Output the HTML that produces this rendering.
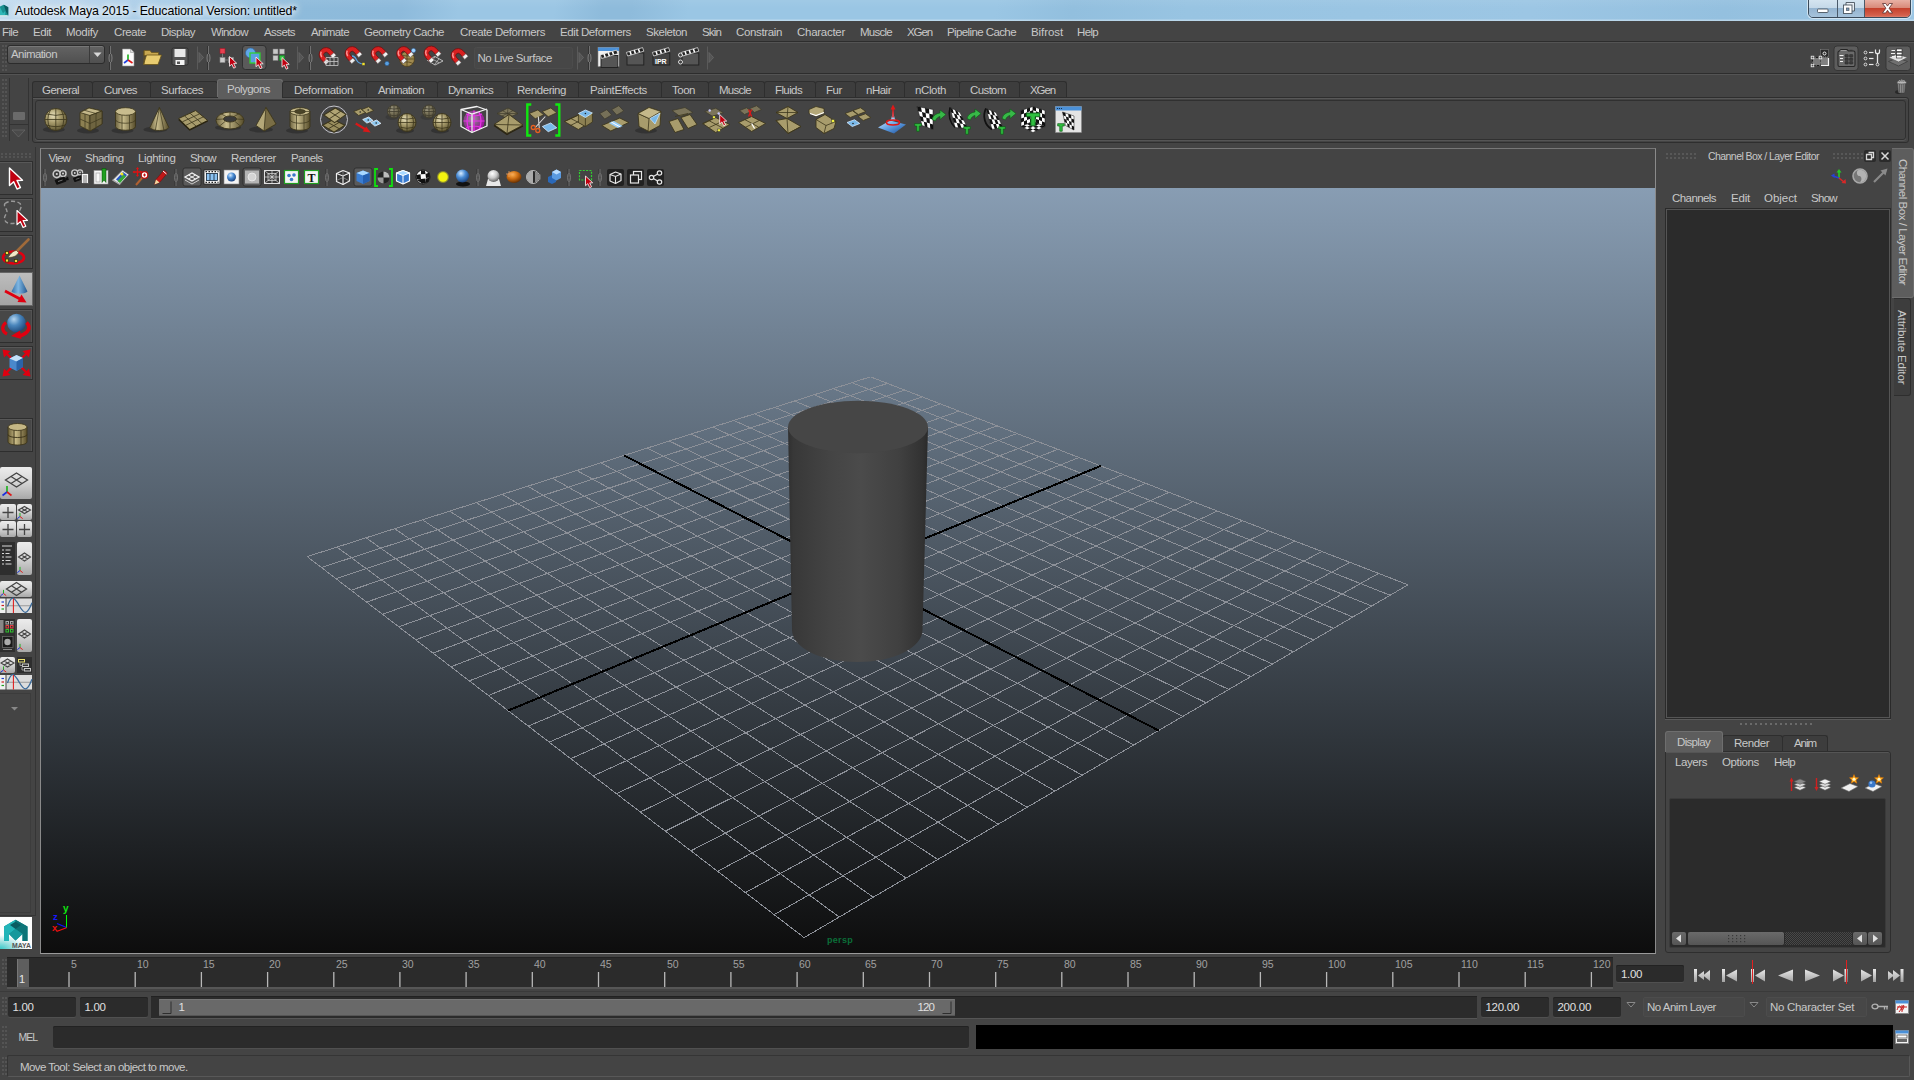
<!DOCTYPE html>
<html lang="en"><head><meta charset="utf-8"><title>Autodesk Maya 2015 - Educational Version: untitled*</title>
<style>
html,body{margin:0;padding:0;background:#444;}
body{width:1914px;height:1080px;overflow:hidden;font-family:"Liberation Sans",sans-serif;font-size:11px;color:#c8c8c8;}
#app{position:relative;width:1914px;height:1080px;overflow:hidden;background:#444;}
.a{position:absolute;}
.t{position:absolute;white-space:nowrap;line-height:14px;height:14px;color:#c8c8c8;font-size:11.5px;}
svg{position:absolute;overflow:visible;}
.fld{position:absolute;background:#2b2b2b;border-radius:2px;box-shadow:inset 0 1px 0 #222, 0 1px 0 #505050;}
.mi{position:absolute;top:25px;white-space:nowrap;line-height:14px;height:14px;color:#c8c8c8;font-size:11.5px;}
.tab{position:absolute;top:81px;height:17px;box-sizing:border-box;border:1px solid #2e2e2e;border-bottom:none;background:#3d3d3d;border-radius:3px 3px 0 0;}
.tabt{position:absolute;top:83px;white-space:nowrap;line-height:14px;height:14px;color:#c8c8c8;font-size:11.5px;}


#vp{left:41px;top:188px;width:1614px;height:765px;background:linear-gradient(180deg,rgb(136,157,179) 0,rgb(13,13,13) 100%);overflow:hidden;}

.grip{position:absolute;background-image:radial-gradient(circle at 1px 1px,#585858 0.9px,transparent 1.1px);background-size:4px 4px;}
.vtab{position:absolute;box-sizing:border-box;border:1px solid #2e2e2e;border-left:none;border-radius:0 3px 3px 0;}
.vt{position:absolute;white-space:nowrap;transform-origin:0 0;transform:rotate(90deg);line-height:14px;height:14px;font-size:11.5px;color:#c8c8c8;}
.sbtn{position:absolute;background:linear-gradient(180deg,#6a6a6a,#555);border-radius:2px;box-shadow:0 0 0 1px #2a2a2a;}
.vgrip{position:absolute;width:5px;background-image:radial-gradient(circle at 1px 1px,#545454 0.9px,transparent 1.1px);background-size:3px 4px;}
.dd{position:absolute;box-sizing:border-box;border:1px solid #4c4c4c;border-radius:2px;background:#474747;}
.tb{position:absolute;left:0;width:33px;height:34px;box-sizing:border-box;border:1px solid #2e2e2e;border-left:none;background:#474747;box-shadow:inset 0 1px 0 #585858, inset -1px 0 0 #525252;}
.lb{position:absolute;background:linear-gradient(180deg,#ececec,#d8d8d8 45%,#a8a8a8);border-radius:2px;overflow:hidden;}
.db{position:absolute;background:#2e2e2e;}
</style></head><body>
<div id="app">
<!-- s00_base -->
<div class="a" id="titlebar" style="left:0;top:0;width:1914px;height:21px;background:linear-gradient(100deg,#c4dcef 0,#b2d1ea 5%,#9fc8e5 11%,#8ebbdb 15%,#8dbadb 21%,#9bc6e4 24%,#9bc6e4 29%,#8ebbdb 31.5%,#8ebbdb 33%,#9ac6e4 36%,#9ac6e4 52%,#92bfde 56%,#98c4e2 62%,#9cc6e4 80%,#94c0df 90%,#9cc6e4 100%);"></div>
<div class="a" style="left:0;top:0;width:1914px;height:21px;background:linear-gradient(180deg,rgba(255,255,255,.06),rgba(255,255,255,0) 40%,rgba(255,255,255,0) 88%,rgba(255,255,255,.4) 100%);"></div>
<svg width="9" height="14" viewBox="0 0 12 18" style="left:0;top:4px"><path d="M0 3l5-2.500 6 3.500v11h-11z" fill="#1a9090"/><path d="M5 .5l6 3.500v11l-3-5z" fill="#0a5a60"/><path d="M0 15V4l4 8 3-3v6z" fill="#30b8b8"/><rect x="0" y="14.500" width="10" height="2" fill="#cfe8e8"/></svg>
<span class="t" style="left:15px;top:3.5px;font-size:12.4px;color:#000;line-height:15px;height:15px;letter-spacing:-0.13px;text-shadow:0 0 5px #fff,0 0 8px #fff,0 0 12px rgba(255,255,255,.9);">Autodesk Maya 2015 - Educational Version: untitled*</span>
<div class="a" style="left:1808px;top:-1px;width:103px;height:19px;box-sizing:border-box;border:1px solid #3a4a5a;border-radius:0 0 5px 5px;overflow:hidden;box-shadow:0 0 0 1px rgba(255,255,255,.55);"><div class="a" style="left:0;top:0;width:28px;height:18px;background:linear-gradient(180deg,#d4e4f0 0,#c4d8e8 45%,#94b4d0 46%,#a8c4dc 100%);border-right:1px solid #4a5a6a;"></div><div class="a" style="left:29px;top:0;width:26px;height:18px;background:linear-gradient(180deg,#d4e4f0 0,#c4d8e8 45%,#94b4d0 46%,#a8c4dc 100%);border-right:1px solid #4a5a6a;"></div><div class="a" style="left:56px;top:0;width:47px;height:18px;background:linear-gradient(180deg,#e8b0a4 0,#d88878 45%,#c4402c 46%,#d4604c 85%,#e09080 100%);"></div></div>
<svg width="103" height="18" viewBox="1808 0 103 18" style="left:1808px;top:0"><rect x="1817.500" y="9" width="10.500" height="3.500" rx=".8" fill="#fff" stroke="#4a5560" stroke-width=".9"/><path d="M1846 5.500v-3h8.500v8.500h-2.500" fill="#e8eef4" stroke="#4a5560" stroke-width=".9"/><rect x="1843.500" y="5" width="8.500" height="8.500" fill="#fff" stroke="#4a5560" stroke-width=".9"/><rect x="1846.500" y="8" width="2.500" height="2.500" fill="#7a9ab8" stroke="#4a5560" stroke-width=".7"/><path d="M1882.500 3.500h3.200l1.800 2.600 1.800-2.600h3.200l-3.400 4.700 3.400 4.800h-3.200l-1.800-2.700-1.800 2.700h-3.200l3.400-4.800z" fill="#fff" stroke="#5a3030" stroke-width=".8" stroke-linejoin="round"/></svg>
<!-- s05_menus -->
<div class="a" style="left:0;top:21px;width:1914px;height:21px;background:#444;"></div>
<div class="a" style="left:0;top:41px;width:1914px;height:1px;background:#2d2d2d;"></div>
<div class="a" style="left:0;top:42px;width:1914px;height:1px;background:#545454;"></div>
<span class="t" style="left:2px;top:25px;font-size:11.5px;color:#c8c8c8;line-height:14px;height:14px;letter-spacing:-0.63px;">File</span>
<span class="t" style="left:33px;top:25px;font-size:11.5px;color:#c8c8c8;line-height:14px;height:14px;letter-spacing:-0.46px;">Edit</span>
<span class="t" style="left:66px;top:25px;font-size:11.5px;color:#c8c8c8;line-height:14px;height:14px;letter-spacing:-0.31px;">Modify</span>
<span class="t" style="left:114px;top:25px;font-size:11.5px;color:#c8c8c8;line-height:14px;height:14px;letter-spacing:-0.42px;">Create</span>
<span class="t" style="left:161px;top:25px;font-size:11.5px;color:#c8c8c8;line-height:14px;height:14px;letter-spacing:-0.53px;">Display</span>
<span class="t" style="left:211px;top:25px;font-size:11.5px;color:#c8c8c8;line-height:14px;height:14px;letter-spacing:-0.65px;">Window</span>
<span class="t" style="left:264px;top:25px;font-size:11.5px;color:#c8c8c8;line-height:14px;height:14px;letter-spacing:-0.59px;">Assets</span>
<span class="t" style="left:311px;top:25px;font-size:11.5px;color:#c8c8c8;line-height:14px;height:14px;letter-spacing:-0.60px;">Animate</span>
<span class="t" style="left:364px;top:25px;font-size:11.5px;color:#c8c8c8;line-height:14px;height:14px;letter-spacing:-0.50px;">Geometry Cache</span>
<span class="t" style="left:460px;top:25px;font-size:11.5px;color:#c8c8c8;line-height:14px;height:14px;letter-spacing:-0.40px;">Create Deformers</span>
<span class="t" style="left:560px;top:25px;font-size:11.5px;color:#c8c8c8;line-height:14px;height:14px;letter-spacing:-0.41px;">Edit Deformers</span>
<span class="t" style="left:646px;top:25px;font-size:11.5px;color:#c8c8c8;line-height:14px;height:14px;letter-spacing:-0.47px;">Skeleton</span>
<span class="t" style="left:702px;top:25px;font-size:11.5px;color:#c8c8c8;line-height:14px;height:14px;letter-spacing:-0.84px;">Skin</span>
<span class="t" style="left:736px;top:25px;font-size:11.5px;color:#c8c8c8;line-height:14px;height:14px;letter-spacing:-0.36px;">Constrain</span>
<span class="t" style="left:797px;top:25px;font-size:11.5px;color:#c8c8c8;line-height:14px;height:14px;letter-spacing:-0.28px;">Character</span>
<span class="t" style="left:860px;top:25px;font-size:11.5px;color:#c8c8c8;line-height:14px;height:14px;letter-spacing:-0.74px;">Muscle</span>
<span class="t" style="left:907px;top:25px;font-size:11.5px;color:#c8c8c8;line-height:14px;height:14px;letter-spacing:-1.11px;">XGen</span>
<span class="t" style="left:947px;top:25px;font-size:11.5px;color:#c8c8c8;line-height:14px;height:14px;letter-spacing:-0.60px;">Pipeline Cache</span>
<span class="t" style="left:1031px;top:25px;font-size:11.5px;color:#c8c8c8;line-height:14px;height:14px;letter-spacing:-0.08px;">Bifrost</span>
<span class="t" style="left:1077px;top:25px;font-size:11.5px;color:#c8c8c8;line-height:14px;height:14px;letter-spacing:-0.66px;">Help</span>
<div class="a" style="left:0;top:73px;width:1914px;height:1px;background:#2d2d2d;"></div>
<div class="a" style="left:0;top:74px;width:1914px;height:1px;background:#545454;"></div>
<div class="tab" style="left:32px;width:61px;"></div>
<span class="t" style="left:42px;top:83px;font-size:11.5px;color:#c8c8c8;line-height:14px;height:14px;letter-spacing:-0.56px;">General</span>
<div class="tab" style="left:92px;width:59px;"></div>
<span class="t" style="left:104px;top:83px;font-size:11.5px;color:#c8c8c8;line-height:14px;height:14px;letter-spacing:-0.57px;">Curves</span>
<div class="tab" style="left:150px;width:68px;"></div>
<span class="t" style="left:161px;top:83px;font-size:11.5px;color:#c8c8c8;line-height:14px;height:14px;letter-spacing:-0.42px;">Surfaces</span>
<div class="tab" style="left:217px;width:66px;top:79px;height:21px;background:#5d5d5d;border-color:#6e6e6e;"></div>
<span class="t" style="left:227px;top:82px;font-size:11.5px;color:#c8c8c8;line-height:14px;height:14px;letter-spacing:-0.54px;">Polygons</span>
<div class="tab" style="left:282px;width:85px;"></div>
<span class="t" style="left:294px;top:83px;font-size:11.5px;color:#c8c8c8;line-height:14px;height:14px;letter-spacing:-0.33px;">Deformation</span>
<div class="tab" style="left:366px;width:72px;"></div>
<span class="t" style="left:378px;top:83px;font-size:11.5px;color:#c8c8c8;line-height:14px;height:14px;letter-spacing:-0.57px;">Animation</span>
<div class="tab" style="left:437px;width:71px;"></div>
<span class="t" style="left:448px;top:83px;font-size:11.5px;color:#c8c8c8;line-height:14px;height:14px;letter-spacing:-0.69px;">Dynamics</span>
<div class="tab" style="left:507px;width:72px;"></div>
<span class="t" style="left:517px;top:83px;font-size:11.5px;color:#c8c8c8;line-height:14px;height:14px;letter-spacing:-0.45px;">Rendering</span>
<div class="tab" style="left:578px;width:84px;"></div>
<span class="t" style="left:590px;top:83px;font-size:11.5px;color:#c8c8c8;line-height:14px;height:14px;letter-spacing:-0.35px;">PaintEffects</span>
<div class="tab" style="left:661px;width:48px;"></div>
<span class="t" style="left:672px;top:83px;font-size:11.5px;color:#c8c8c8;line-height:14px;height:14px;letter-spacing:-0.48px;">Toon</span>
<div class="tab" style="left:708px;width:57px;"></div>
<span class="t" style="left:719px;top:83px;font-size:11.5px;color:#c8c8c8;line-height:14px;height:14px;letter-spacing:-0.74px;">Muscle</span>
<div class="tab" style="left:764px;width:52px;"></div>
<span class="t" style="left:775px;top:83px;font-size:11.5px;color:#c8c8c8;line-height:14px;height:14px;letter-spacing:-0.61px;">Fluids</span>
<div class="tab" style="left:815px;width:41px;"></div>
<span class="t" style="left:826px;top:83px;font-size:11.5px;color:#c8c8c8;line-height:14px;height:14px;letter-spacing:-0.42px;">Fur</span>
<div class="tab" style="left:855px;width:50px;"></div>
<span class="t" style="left:866px;top:83px;font-size:11.5px;color:#c8c8c8;line-height:14px;height:14px;letter-spacing:-0.50px;">nHair</span>
<div class="tab" style="left:904px;width:56px;"></div>
<span class="t" style="left:915px;top:83px;font-size:11.5px;color:#c8c8c8;line-height:14px;height:14px;letter-spacing:-0.38px;">nCloth</span>
<div class="tab" style="left:959px;width:61px;"></div>
<span class="t" style="left:970px;top:83px;font-size:11.5px;color:#c8c8c8;line-height:14px;height:14px;letter-spacing:-0.60px;">Custom</span>
<div class="tab" style="left:1019px;width:48px;"></div>
<span class="t" style="left:1030px;top:83px;font-size:11.5px;color:#c8c8c8;line-height:14px;height:14px;letter-spacing:-1.11px;">XGen</span>
<div class="a" style="left:32px;top:97px;width:1877px;height:46px;box-sizing:border-box;border:1px solid #2e2e2e;border-radius:0 3px 3px 3px;background:#444;box-shadow:inset 0 1px 0 #585858;"></div>
<div class="a" style="left:35px;top:100px;width:1871px;height:40px;box-sizing:border-box;border:1px solid #303030;border-radius:3px;background:#444;box-shadow:0 1px 0 #555;"></div>
<div class="a" style="left:218px;top:97px;width:64px;height:2px;background:#5d5d5d;"></div>
<!-- s06_status -->
<div class="a" style="left:2px;top:45px;width:5px;height:26px;background-image:radial-gradient(circle at 1px 1px,#545454 0.9px,transparent 1.1px);background-size:3px 4px;"></div>
<div class="a" style="left:7px;top:45px;width:98px;height:19px;box-sizing:border-box;border:1px solid #2c2c2c;border-radius:3px;background:linear-gradient(180deg,#636363,#505050);box-shadow:inset 0 1px 0 #777;"></div>
<div class="a" style="left:89px;top:46px;width:1px;height:17px;background:#3a3a3a;"></div>
<svg width="10" height="6" style="left:93px;top:52px"><path d="M.5 .5h8L4.500 5z" fill="#d8d8d8"/></svg>
<span class="t" style="left:11px;top:47px;font-size:11.5px;color:#c8c8c8;line-height:14px;height:14px;letter-spacing:-0.57px;">Animation</span>
<svg width="720" height="32" viewBox="0 42 720 32" style="left:0;top:42px"><path d="M109.5 46V70" stroke="#333" stroke-width="1"/><path d="M110.5 46V70" stroke="#707070" stroke-width="1"/><ellipse cx="110.5" cy="58" rx="1.500" ry="4.500" fill="#444" stroke="#888" stroke-width=".9"/><g transform="translate(0 2)"><path d="M122.500 47h8l3.500 3.500v13.500h-11.500z" fill="#fafafa" stroke="#999" stroke-width=".6"/><path d="M130.500 47v3.500h3.500" fill="#ddd" stroke="#999" stroke-width=".6"/><path d="M128 58v-5.500" stroke="#18b018" stroke-width="1.600"/><path d="M128 58l-4 3" stroke="#2040e0" stroke-width="1.600"/><path d="M128 58l4.500 3" stroke="#e01818" stroke-width="1.600"/></g><path d="M144 50.500h6l1.500 2h7v3h-14.500z" fill="#c8a850" stroke="#6a5418" stroke-width=".7"/><path d="M143.500 64.500l3-9.500h15l-3.500 9.500z" fill="#e8cc70" stroke="#6a5418" stroke-width=".8"/><path d="M144 64V51" stroke="#6a5418" stroke-width=".8"/><rect x="172" y="48" width="16" height="17" rx="1.500" fill="#555" stroke="#2a2a2a" stroke-width=".8"/><rect x="174.500" y="49" width="11" height="8" fill="#e8e8e8"/><rect x="175.500" y="60" width="9" height="5" fill="#f4f4f4"/><rect x="177" y="61.500" width="3" height="2.500" fill="#555"/><path d="M197.5 46.5V69.5" stroke="#5a5a5a" stroke-width="1"/><path d="M199 52.5l4.500 5-4.500 5z" fill="#555" stroke="#6a6a6a" stroke-width=".8"/><path d="M207.5 46V70" stroke="#333" stroke-width="1"/><path d="M208.5 46V70" stroke="#707070" stroke-width="1"/><ellipse cx="208.5" cy="58" rx="1.500" ry="4.500" fill="#444" stroke="#888" stroke-width=".9"/><rect x="220" y="48.500" width="5" height="5" fill="#e84050" stroke="#a01828" stroke-width=".6"/><rect x="220" y="57.500" width="5" height="5" fill="#ccc" stroke="#888" stroke-width=".6"/><rect x="228.500" y="57.500" width="5" height="5" fill="#ccc" stroke="#888" stroke-width=".6"/><path d="M222.500 53.500v4M225 60h3.500" stroke="#888" stroke-width=".8"/><g transform="translate(229.5 56.5) scale(0.72)"><path d="M0 0L0 13.5L3.2 10.6L5.8 16.2L8.4 15L5.8 9.6L10 9.4Z" fill="#c00010" stroke="#fff" stroke-width="1.1" stroke-linejoin="round"/></g><rect x="242.500" y="45.500" width="23.500" height="24" rx="3" fill="#5a5a5a" stroke="#2c2c2c" stroke-width=".9"/><circle cx="250.500" cy="53" r="5" fill="#60a8e8" stroke="#2860a0" stroke-width=".6"/><rect x="250" y="53" width="10" height="10" fill="#5aa0e0" stroke="#30d030" stroke-width="1.300"/><g transform="translate(256 57) scale(0.72)"><path d="M0 0L0 13.5L3.2 10.6L5.8 16.2L8.4 15L5.8 9.6L10 9.4Z" fill="#c00010" stroke="#fff" stroke-width="1.1" stroke-linejoin="round"/></g><g fill="#c8c8c8" stroke="#777" stroke-width=".5"><rect x="273" y="49" width="5" height="5"/><rect x="279.500" y="49" width="5" height="5"/><rect x="273" y="55.500" width="5" height="5"/></g><rect x="279.500" y="55.500" width="5" height="5" fill="#30c040" stroke="#108020" stroke-width=".5"/><g transform="translate(282 57.5) scale(0.72)"><path d="M0 0L0 13.5L3.2 10.6L5.8 16.2L8.4 15L5.8 9.6L10 9.4Z" fill="#c00010" stroke="#fff" stroke-width="1.1" stroke-linejoin="round"/></g><path d="M297.5 46.5V69.5" stroke="#5a5a5a" stroke-width="1"/><path d="M299 52.5l4.500 5-4.500 5z" fill="#555" stroke="#6a6a6a" stroke-width=".8"/><path d="M309.5 46V70" stroke="#333" stroke-width="1"/><path d="M310.5 46V70" stroke="#707070" stroke-width="1"/><ellipse cx="310.5" cy="58" rx="1.500" ry="4.500" fill="#444" stroke="#888" stroke-width=".9"/><g transform="translate(326.5 55) rotate(-42) scale(1.08)"><path d="M-6.500 5v-5.500a6.500 6.500 0 0 1 13 0V5h-4.300V-.5a2.200 2.200 0 0 0-4.400 0V5z" fill="#d82020" stroke="#701010" stroke-width=".7"/><rect x="-6.500" y="3" width="4.300" height="3.200" fill="#f0f0f0" stroke="#555" stroke-width=".5"/><rect x="2.200" y="3" width="4.300" height="3.200" fill="#f0f0f0" stroke="#555" stroke-width=".5"/><path d="M-4.500 -1.500a4.500 4.500 0 0 1 3-4" fill="none" stroke="#ff9090" stroke-width="1.200"/></g><path d="M326 57.500h12M326 61.500h12M326 65.500h12M326 57.500v8M330 57.500v8M334 57.500v8M338 57.500v8" stroke="#c8c8c8" stroke-width=".8" fill="none"/><g transform="translate(352.5 54) rotate(-42) scale(1.08)"><path d="M-6.500 5v-5.500a6.500 6.500 0 0 1 13 0V5h-4.300V-.5a2.200 2.200 0 0 0-4.400 0V5z" fill="#d82020" stroke="#701010" stroke-width=".7"/><rect x="-6.500" y="3" width="4.300" height="3.200" fill="#f0f0f0" stroke="#555" stroke-width=".5"/><rect x="2.200" y="3" width="4.300" height="3.200" fill="#f0f0f0" stroke="#555" stroke-width=".5"/><path d="M-4.500 -1.500a4.500 4.500 0 0 1 3-4" fill="none" stroke="#ff9090" stroke-width="1.200"/></g><path d="M352 56c6 0 2 8 12 8" fill="none" stroke="#5aa0e0" stroke-width="1.300"/><rect x="362" y="62.500" width="3" height="3" fill="#f0e030" stroke="#333" stroke-width=".5"/><g transform="translate(378.5 54) rotate(-42) scale(1.08)"><path d="M-6.500 5v-5.500a6.500 6.500 0 0 1 13 0V5h-4.300V-.5a2.200 2.200 0 0 0-4.400 0V5z" fill="#d82020" stroke="#701010" stroke-width=".7"/><rect x="-6.500" y="3" width="4.300" height="3.200" fill="#f0f0f0" stroke="#555" stroke-width=".5"/><rect x="2.200" y="3" width="4.300" height="3.200" fill="#f0f0f0" stroke="#555" stroke-width=".5"/><path d="M-4.500 -1.500a4.500 4.500 0 0 1 3-4" fill="none" stroke="#ff9090" stroke-width="1.200"/></g><circle cx="387" cy="63.500" r="2.200" fill="#5aa0e0" stroke="#1c4a80" stroke-width=".5"/><circle cx="407" cy="59" r="7.500" fill="#a08a50" stroke="#4a3c18" stroke-width=".7"/><path d="M399.500 59h15M407 51.500v15M401 54.500c4 2 8 2 12 0M401 63.500c4-2 8-2 12 0" fill="none" stroke="#4a3c18" stroke-width=".7"/><g transform="translate(404 54) rotate(-42) scale(1.08)"><path d="M-6.500 5v-5.500a6.500 6.500 0 0 1 13 0V5h-4.300V-.5a2.200 2.200 0 0 0-4.400 0V5z" fill="#d82020" stroke="#701010" stroke-width=".7"/><rect x="-6.500" y="3" width="4.300" height="3.200" fill="#f0f0f0" stroke="#555" stroke-width=".5"/><rect x="2.200" y="3" width="4.300" height="3.200" fill="#f0f0f0" stroke="#555" stroke-width=".5"/><path d="M-4.500 -1.500a4.500 4.500 0 0 1 3-4" fill="none" stroke="#ff9090" stroke-width="1.200"/></g><circle cx="413.500" cy="50.500" r="2.200" fill="#9cd0ff" stroke="#1c4a80" stroke-width=".5"/><path d="M427 60l8-3.500 8 4.500-8 4z" fill="none" stroke="#c8c8c8" stroke-width=".9"/><path d="M431 58.300l8 4.400M435 56.500l-4 6M439 58.800l-4.500 5.800" stroke="#c8c8c8" stroke-width=".7"/><g transform="translate(431.5 53.5) rotate(-42) scale(1.08)"><path d="M-6.500 5v-5.500a6.500 6.500 0 0 1 13 0V5h-4.300V-.5a2.200 2.200 0 0 0-4.400 0V5z" fill="#d82020" stroke="#701010" stroke-width=".7"/><rect x="-6.500" y="3" width="4.300" height="3.200" fill="#f0f0f0" stroke="#555" stroke-width=".5"/><rect x="2.200" y="3" width="4.300" height="3.200" fill="#f0f0f0" stroke="#555" stroke-width=".5"/><path d="M-4.500 -1.500a4.500 4.500 0 0 1 3-4" fill="none" stroke="#ff9090" stroke-width="1.200"/></g><g transform="translate(458.5 56) rotate(-42) scale(1.08)"><path d="M-6.500 5v-5.500a6.500 6.500 0 0 1 13 0V5h-4.300V-.5a2.200 2.200 0 0 0-4.400 0V5z" fill="#d82020" stroke="#701010" stroke-width=".7"/><rect x="-6.500" y="3" width="4.300" height="3.200" fill="#f0f0f0" stroke="#555" stroke-width=".5"/><rect x="2.200" y="3" width="4.300" height="3.200" fill="#f0f0f0" stroke="#555" stroke-width=".5"/><path d="M-4.500 -1.500a4.500 4.500 0 0 1 3-4" fill="none" stroke="#ff9090" stroke-width="1.200"/></g><rect x="474.500" y="47.500" width="98" height="21" rx="2" fill="#474747" stroke="#4c4c4c"/><path d="M577.5 46.5V69.5" stroke="#5a5a5a" stroke-width="1"/><path d="M579 52.5l4.500 5-4.500 5z" fill="#555" stroke="#6a6a6a" stroke-width=".8"/><path d="M588.5 46V70" stroke="#333" stroke-width="1"/><path d="M589.5 46V70" stroke="#707070" stroke-width="1"/><ellipse cx="589.5" cy="58" rx="1.500" ry="4.500" fill="#444" stroke="#888" stroke-width=".9"/><rect x="598" y="47.500" width="21" height="19" fill="#f0f0f0" stroke="#888" stroke-width=".6"/><rect x="598" y="47.500" width="21" height="3.500" fill="#4a90d8"/><g transform="translate(601 49.5) scale(1.2)"><rect x="0" y="5" width="14" height="10" fill="#555" stroke="#222" stroke-width=".8"/><path d="M-.5 4.500l13.500-4 1 3-13.500 4z" fill="#222" stroke="#eee" stroke-width=".6"/><path d="M2.500 3.600l1 2.800M6 2.600l1 2.800M9.500 1.600l1 2.800" stroke="#fff" stroke-width="1.300"/></g><g transform="translate(627 47) scale(1.2)"><rect x="0" y="5" width="14" height="10" fill="#555" stroke="#222" stroke-width=".8"/><path d="M-.5 4.500l13.500-4 1 3-13.500 4z" fill="#222" stroke="#eee" stroke-width=".6"/><path d="M2.500 3.600l1 2.800M6 2.600l1 2.800M9.500 1.600l1 2.800" stroke="#fff" stroke-width="1.300"/></g><g transform="translate(653 47) scale(1.2)"><rect x="0" y="5" width="14" height="10" fill="#444" stroke="#222" stroke-width=".8"/><path d="M-.5 4.500l13.500-4 1 3-13.500 4z" fill="#222" stroke="#eee" stroke-width=".6"/><path d="M2.500 3.600l1 2.800M6 2.600l1 2.800M9.500 1.600l1 2.800" stroke="#fff" stroke-width="1.300"/></g><text x="655" y="64" font-size="7" font-weight="bold" fill="#fff" font-family="Liberation Sans,sans-serif">IPR</text><g transform="translate(682 47) scale(1.2)"><rect x="0" y="5" width="14" height="10" fill="#555" stroke="#222" stroke-width=".8"/><path d="M-.5 4.500l13.500-4 1 3-13.500 4z" fill="#222" stroke="#eee" stroke-width=".6"/><path d="M2.500 3.600l1 2.800M6 2.600l1 2.800M9.500 1.600l1 2.800" stroke="#fff" stroke-width="1.300"/></g><circle cx="680.500" cy="55" r="2" fill="none" stroke="#ddd" stroke-width="1"/><circle cx="680.500" cy="62" r="2" fill="none" stroke="#ddd" stroke-width="1"/><path d="M707.5 46.5V69.5" stroke="#5a5a5a" stroke-width="1"/><path d="M709 52.5l4.500 5-4.500 5z" fill="#555" stroke="#6a6a6a" stroke-width=".8"/></svg>
<span class="t" style="left:477.5px;top:51px;font-size:11.5px;color:#c8c8c8;line-height:14px;height:14px;letter-spacing:-0.49px;">No Live Surface</span>
<svg width="110" height="32" viewBox="1806 42 110 32" style="left:1806px;top:42px"><rect x="1812.500" y="57.500" width="8" height="8" fill="#7a7a7a" stroke="#1a1a1a" stroke-width="1" stroke-dasharray="2 1.500"/><rect x="1820.500" y="57.500" width="8" height="8" fill="#808080"/><path d="M1821 65.500h7.500V58" fill="none" stroke="#f4f4f4" stroke-width="1.200"/><rect x="1820.500" y="49.500" width="8" height="7.500" fill="#2a2a2a" stroke="#999" stroke-width=".8" stroke-dasharray="1 1"/><circle cx="1824.500" cy="53.500" r="1.500" fill="none" stroke="#f0f0f0" stroke-width="1"/><rect x="1811.2" y="56.2" width="2.600" height="2.600" fill="#555" stroke="#f0f0f0" stroke-width=".8"/><rect x="1819.2" y="56.2" width="2.600" height="2.600" fill="#555" stroke="#f0f0f0" stroke-width=".8"/><rect x="1811.2" y="64.2" width="2.600" height="2.600" fill="#555" stroke="#f0f0f0" stroke-width=".8"/><rect x="1834" y="46" width="24" height="24.500" rx="3" fill="#5d5d5d" stroke="#333" stroke-width=".9"/><path d="M1838 52.500c0-1 .5-1.500 1.500-1.500l1.500-1.500h6l1.500 1.500h5c1 0 1.500 .5 1.500 1.500v12.500c0 1-.5 1.500-1.500 1.500h-14c-1 0-1.500-.5-1.500-1.500z" fill="#6a6a6a" stroke="#262626" stroke-width="1.100"/><path d="M1840.500 50.500h6" stroke="#999" stroke-width="1"/><path d="M1849.500 50.300h3" stroke="#333" stroke-width="1"/><path d="M1839.500 55.500h4M1840 58.500h3M1840 61.500h3" stroke="#f0f0f0" stroke-width="1.100"/><g fill="#3a3a3a" stroke="#2a2a2a" stroke-width=".5"><rect x="1845" y="54.500" width="3.300" height="2.600" rx=".6"/><rect x="1849.500" y="54.500" width="3.300" height="2.600" rx=".6"/><rect x="1845" y="58" width="3.300" height="2.600" rx=".6"/><rect x="1849.500" y="58" width="3.300" height="2.600" rx=".6"/><rect x="1845" y="61.500" width="3.300" height="2.600" rx=".6"/><rect x="1849.500" y="61.500" width="3.300" height="2.600" rx=".6"/></g><circle cx="1865.500" cy="52.5" r="1.400" fill="#444" stroke="#e8e8e8" stroke-width=".9"/><path d="M1869 52.5h4.500" stroke="#e8e8e8" stroke-width="1.200"/><circle cx="1865.500" cy="58.5" r="1.400" fill="#444" stroke="#e8e8e8" stroke-width=".9"/><path d="M1869 58.5h4.500" stroke="#e8e8e8" stroke-width="1.200"/><circle cx="1865.500" cy="64.5" r="1.400" fill="#444" stroke="#e8e8e8" stroke-width=".9"/><path d="M1869 64.5h4.500" stroke="#e8e8e8" stroke-width="1.200"/><path d="M1877.500 53v10" stroke="#e8e8e8" stroke-width="1.300"/><path d="M1875.500 49.500v2.200a2 2 0 0 0 4 0v-2.200" fill="none" stroke="#e8e8e8" stroke-width="1.200"/><circle cx="1877.500" cy="64.500" r="1.400" fill="#444" stroke="#e8e8e8" stroke-width=".9"/><rect x="1886" y="46" width="24.500" height="24.500" rx="3" fill="#5d5d5d" stroke="#333" stroke-width=".9"/><path d="M1888.500 61.500l9-3.500 10 3.500-9 4.500z" fill="#707070" stroke="#3a3a3a" stroke-width=".7"/><path d="M1888.500 57.500l9-3.500 10 3.500-9 4.500z" fill="#e0e0e0" stroke="#555" stroke-width=".7"/><path d="M1891.500 50.500h3.500M1891 53.500h4M1892 56.500h3" stroke="#f0f0f0" stroke-width="1"/><g fill="#fff" stroke="#222" stroke-width=".6"><rect x="1896.500" y="49" width="5.500" height="2.600"/><rect x="1896.500" y="52.200" width="5.500" height="2.600"/><rect x="1896.500" y="55.400" width="5.500" height="2.600"/></g></svg>
<!-- s07_shelf -->
<div class="a" style="left:2px;top:79px;width:5px;height:60px;background-image:radial-gradient(circle at 1px 1px,#545454 0.9px,transparent 1.1px);background-size:3px 4px;"></div>
<div class="a" style="left:9px;top:78px;width:20px;height:63px;box-sizing:border-box;border:1px solid #333;border-top:none;border-bottom:none;"></div>
<div class="a" style="left:13px;top:112px;width:12px;height:8px;background:#6a6a6a;border-radius:1px;"></div>
<div class="a" style="left:10px;top:124px;width:18px;height:1px;background:#333;"></div>
<svg width="16" height="9" style="left:11px;top:129px"><path d="M1 1h13L7.500 8z" fill="#4a4a4a" stroke="#666" stroke-width=".8"/></svg>
<svg width="16" height="16" viewBox="1893 79 16 16" style="left:1893px;top:79px"><ellipse cx="1899.500" cy="92" rx="4.500" ry="2" fill="#222" opacity=".8"/><path d="M1897.500 83l.8 9.500c1 1 5.500 1 6.500 0l.8-9.500z" fill="#8c8c8c" stroke="#3a3a3a" stroke-width=".6"/><path d="M1899.500 84v8.500M1901.700 84.300v8.700M1903.800 84v8.500" stroke="#555" stroke-width=".8"/><ellipse cx="1901.700" cy="82.500" rx="4.800" ry="1.500" fill="#b8b8b8" stroke="#444" stroke-width=".6"/><path d="M1898.500 82l1-1.800 1 1.300 1.200-1.800 1.200 1.800 1-1.300 1 1.800" fill="none" stroke="#aaa" stroke-width=".9"/></svg>
<svg width="1100" height="40" viewBox="30 100 1100 40" style="left:30px;top:100px"><defs><radialGradient id="tsph" cx=".38" cy=".32" r=".8"><stop offset="0" stop-color="#e8e0bc"/><stop offset=".4" stop-color="#a89c6c"/><stop offset="1" stop-color="#4e4626"/></radialGradient><linearGradient id="tcy" x1="0" x2="1"><stop offset="0" stop-color="#6e6440"/><stop offset=".38" stop-color="#c8bc8c"/><stop offset="1" stop-color="#564c2a"/></linearGradient><radialGradient id="psph" cx=".42" cy=".4" r=".6"><stop offset="0" stop-color="#a0a0a0"/><stop offset=".55" stop-color="#8a4a8a"/><stop offset="1" stop-color="#a010a0"/></radialGradient><linearGradient id="bluep" x1="0" x2="1" y1="0" y2="1"><stop offset="0" stop-color="#c8e4ff"/><stop offset=".5" stop-color="#5a9ae0"/><stop offset="1" stop-color="#1c4a90"/></linearGradient></defs><g transform="translate(55.8 119.5)"><ellipse cx="-2" cy="10" rx="11" ry="3" fill="#1e1e1e" opacity=".45"/><circle r="11" fill="url(#tsph)" stroke="#3c361c" stroke-width=".9"/><path d="M-11 0H11M0 -11V11M-9.35 -5.5Q0 -2.75 9.35 -5.5M-9.35 5.5Q0 8.8 9.35 5.5M-5.5 -9.35Q-10.45 0 -5.5 9.35M5.5 -9.35Q10.45 0 5.5 9.35" fill="none" stroke="#3c361c" stroke-width=".8"/></g><g transform="translate(91 119.5)"><ellipse cx="-3" cy="11" rx="11" ry="3" fill="#1e1e1e" opacity=".45"/><path d="M-11 -7l9-4.500 13 3v13l-12 7-10-5z" fill="#8c8052" stroke="#3c361c" stroke-width=".9" stroke-linejoin="round"/><path d="M-11 -7l9-4.500 13 3-12 4.500z" fill="#c4b88a" stroke="#3c361c" stroke-width=".8"/><path d="M-1 -4l12-4.500v13l-12 7z" fill="#6e6440" stroke="#3c361c" stroke-width=".8"/><path d="M-11 -.5l10 4.500 12-5.500M-6 -5.500v14M5 -6.300v14M-6.500 -9.200l12.500 3.500M-1.500 -4l-.5 15.500" fill="none" stroke="#3c361c" stroke-width=".7"/></g><g transform="translate(125.5 119.5)"><ellipse cx="-3" cy="11" rx="11" ry="3" fill="#1e1e1e" opacity=".45"/><path d="M-10 -8v15c0 5 20 5 20 0v-15z" fill="url(#tcy)" stroke="#3c361c" stroke-width=".9"/><ellipse cy="-8" rx="10" ry="3.800" fill="#c8bc8e" stroke="#3c361c" stroke-width=".8"/><path d="M-10 0c0 5 20 5 20 0M-3.500 -4.300v15M4 -4.400v15" fill="none" stroke="#3c361c" stroke-width=".7"/></g><g transform="translate(159.4 119.5)"><ellipse cx="-4" cy="10" rx="12" ry="3" fill="#1e1e1e" opacity=".45"/><path d="M0 -12l-9.500 20c2 4 17 4 19 0z" fill="url(#tcy)" stroke="#3c361c" stroke-width=".9" stroke-linejoin="round"/><path d="M0 -12l-4 22.500M0 -12l4.500 22.500" fill="none" stroke="#3c361c" stroke-width=".7"/></g><g transform="translate(192.7 119.5)"><path d="M-14 -1l17-8 12 10-18 9z" fill="#a89c6c" stroke="#3c361c" stroke-width="1" stroke-linejoin="round"/><path d="M-14 0l11 10.500 18-9" fill="none" stroke="#2a2410" stroke-width="1.200"/><path d="M-8.300 -3.700l11.700 10.300M-2.700 -6.300l12 10.300M-10.300 2.300l17.300-8M-6.700 5.700l18-8.700" fill="none" stroke="#3c361c" stroke-width=".8"/></g><g transform="translate(230 119.5)"><ellipse cx="-2" cy="8" rx="13" ry="3" fill="#1e1e1e" opacity=".45"/><ellipse cy="1" rx="14" ry="8.500" fill="url(#tcy)" stroke="#3c361c" stroke-width=".9"/><ellipse cy="-.5" rx="6.500" ry="3" fill="#3a3a3a" stroke="#3c361c" stroke-width=".9"/><path d="M-6.500 -.5L-14 0M6.500 -.5L14 0M-4 -3l-5.500 -3M4 -3l5.500 -3M0 -3.500v-4M-5 2l-6 5M5 2l6 5M0 2.500v7" stroke="#3c361c" stroke-width=".7"/></g><g transform="translate(266 119.5)"><ellipse cx="-5" cy="10" rx="12" ry="3" fill="#1e1e1e" opacity=".45"/><path d="M0 -12l-10 18 8 5.500 12-7z" fill="#b4a878" stroke="#3c361c" stroke-width=".9" stroke-linejoin="round"/><path d="M0 -12l-2 23.500 12-7z" fill="#7a6e46" stroke="#3c361c" stroke-width=".8" stroke-linejoin="round"/></g><g transform="translate(300 119.5)"><ellipse cx="-3" cy="11" rx="11" ry="3" fill="#1e1e1e" opacity=".45"/><path d="M-10 -8v15c0 5 20 5 20 0v-15z" fill="url(#tcy)" stroke="#3c361c" stroke-width=".9"/><ellipse cy="-8" rx="10" ry="3.800" fill="#c8bc8e" stroke="#3c361c" stroke-width=".8"/><ellipse cy="-8" rx="5.500" ry="2" fill="#4a4428" stroke="#3c361c" stroke-width=".8"/><path d="M-10 0c0 5 20 5 20 0M-3.500 -4.300v15M4 -4.400v15M-5.500 -8H-10M5.500 -8H10M0 -6v1.800M0 -10v-1.800" fill="none" stroke="#3c361c" stroke-width=".7"/></g><g transform="translate(334 119.5)"><circle r="13.500" fill="none" stroke="#c4c4cc" stroke-width="1"/><g transform="scale(1.28) translate(-.5 -.5)"><path d="M-8.500 5L0 .500 9 5 .500 10.500z" fill="#9a8e5e" stroke="#3c361c" stroke-width=".8" stroke-linejoin="round"/><path d="M-4.200 2.800l9 5M4.500 2.800l-8.500 5" stroke="#3c361c" stroke-width=".7"/><path d="M-7.500 -3L1.500 -8.500 10 -3.500 1 3z" fill="#b0a474" stroke="#3c361c" stroke-width=".8" stroke-linejoin="round"/><path d="M-3 -5.800l8.500 5.500M5.800 -6l-9 6" stroke="#3c361c" stroke-width=".7"/></g></g><g transform="translate(366.7 119.5)"><path d="M-13 -8l7 -2.75 4.9 3.75 -7 3 z" fill="#a89c6c" stroke="#3c361c" stroke-width="0.8" stroke-linejoin="round"/><path d="M-5 -10l7 -2.75 4.9 3.75 -7 3 z" fill="#a89c6c" stroke="#3c361c" stroke-width="0.8" stroke-linejoin="round"/><path d="M-4 0l6 -2.475 4.2 3.375 -6 2.7 z" fill="#8cc8f0" stroke="#e8f4ff" stroke-width="0.8" stroke-linejoin="round"/><path d="M4 3l6 -2.475 4.2 3.375 -6 2.7 z" fill="#8cc8f0" stroke="#e8f4ff" stroke-width="0.8" stroke-linejoin="round"/><circle cx="-6.500" cy="-7.500" r=".8" fill="#222"/><circle cx="1.500" cy="-9.500" r=".8" fill="#222"/><circle cx="1.500" cy="0.500" r=".8" fill="#222"/><circle cx="9.500" cy="3.500" r=".8" fill="#222"/><path d="M-11 4l10 6" stroke="#d81818" stroke-width="2.200"/><path d="M4 13l-8-1 3.500-5z" fill="#d81818"/></g><g transform="translate(403 119.5)"><g transform="translate(-9 -8)" opacity=".55"><ellipse cx="-2" cy="5.5" rx="6.5" ry="3" fill="#1e1e1e" opacity=".45"/><circle r="6.5" fill="url(#tsph)" stroke="#3c361c" stroke-width=".9"/><path d="M-6.5 0H6.5M0 -6.5V6.5M-5.525 -3.25Q0 -1.625 5.525 -3.25M-5.525 3.25Q0 5.2 5.525 3.25M-3.25 -5.525Q-6.175 0 -3.25 5.525M3.25 -5.525Q6.175 0 3.25 5.525" fill="none" stroke="#3c361c" stroke-width=".8"/></g><g transform="translate(4 3)"><ellipse cx="-2" cy="8" rx="9" ry="3" fill="#1e1e1e" opacity=".45"/><circle r="9" fill="url(#tsph)" stroke="#3c361c" stroke-width=".9"/><path d="M-9 0H9M0 -9V9M-7.65 -4.5Q0 -2.25 7.65 -4.5M-7.65 4.5Q0 7.2 7.65 4.5M-4.5 -7.65Q-8.55 0 -4.5 7.65M4.5 -7.65Q8.55 0 4.5 7.65" fill="none" stroke="#3c361c" stroke-width=".8"/></g></g><g transform="translate(438 119.5)"><g transform="translate(-9 -8)" opacity=".55"><ellipse cx="-2" cy="5.5" rx="6.5" ry="3" fill="#1e1e1e" opacity=".45"/><circle r="6.5" fill="url(#tsph)" stroke="#3c361c" stroke-width=".9"/><path d="M-6.5 0H6.5M0 -6.5V6.5M-5.525 -3.25Q0 -1.625 5.525 -3.25M-5.525 3.25Q0 5.2 5.525 3.25M-3.25 -5.525Q-6.175 0 -3.25 5.525M3.25 -5.525Q6.175 0 3.25 5.525" fill="none" stroke="#3c361c" stroke-width=".8"/></g><g transform="translate(4 3)"><ellipse cx="-2" cy="8" rx="9" ry="3" fill="#1e1e1e" opacity=".45"/><circle r="9" fill="url(#tsph)" stroke="#3c361c" stroke-width=".9"/><path d="M-9 0H9M0 -9V9M-7.65 -4.5Q0 -2.25 7.65 -4.5M-7.65 4.5Q0 7.2 7.65 4.5M-4.5 -7.65Q-8.55 0 -4.5 7.65M4.5 -7.65Q8.55 0 4.5 7.65" fill="none" stroke="#3c361c" stroke-width=".8"/></g></g><g transform="translate(474 119.5)"><circle r="10.500" cx="0" cy="1.500" fill="url(#psph)"/><path d="M-10.500 1.500h21M0 -9v21M-8 -5.500q8 4 16 0M-8 8.500q8 -4 16 0M-5 -7.500q-4 9 0 18M5 -7.500q4 9 0 18" fill="none" stroke="#e830e8" stroke-width="1.200"/><path d="M-13 -10l16-3 10 3.500v16l-15 6.500-11-6z" fill="none" stroke="#f4f4f4" stroke-width="1.300" stroke-linejoin="round"/><path d="M-13 -10l11 4.500 15-5M-2 -5.500v18.500" fill="none" stroke="#f4f4f4" stroke-width="1.200"/></g><g transform="translate(508 119.5)"><g opacity=".6"><path d="M-11 -6L0 -11.500 10 -6 -1 -1z" fill="#a89c6c" stroke="#3c361c" stroke-width=".8"/><path d="M-11 -6l21 0M0 -11.500l-1 10.500M-5.500 -8.800l10 5.300M5 -8.800l-11 5.300" stroke="#3c361c" stroke-width=".7"/></g><path d="M-14 5L1 -5 15 5.500-1 14z" fill="#a89c6c" stroke="#3c361c" stroke-width=".9" stroke-linejoin="round"/><path d="M-14 5l29 .5M1 -5l-2 19" stroke="#3c361c" stroke-width=".8"/><path d="M-14 6l13 9 16-8.500" fill="none" stroke="#2a2410" stroke-width="1.100"/></g><g transform="translate(543.3 119.5)"><path d="M-12 -15h-4v31h4M12 -15h4v31h-4" fill="none" stroke="#10e810" stroke-width="2.400"/><path d="M-14 -6l8.5 -3.575 5.95 4.875 -8.5 3.9 z" fill="#a89c6c" stroke="#3c361c" stroke-width="0.8" stroke-linejoin="round"/><path d="M-1 -8l8.5 -3.575 5.95 4.875 -8.5 3.9 z" fill="#a89c6c" stroke="#3c361c" stroke-width="0.8" stroke-linejoin="round"/><path d="M-1 7l8.5 -3.575 5.95 4.875 -8.5 3.9 z" fill="#78b8e8" stroke="#d0e8ff" stroke-width="0.8" stroke-linejoin="round"/><path d="M-8 8l10-11M-4 9l-1-12" stroke="#d8d8d8" stroke-width="1.100"/><circle cx="-10" cy="8" r="2" fill="none" stroke="#e86020" stroke-width="1.300"/><circle cx="-5.500" cy="11" r="2" fill="none" stroke="#e86020" stroke-width="1.300"/></g><g transform="translate(578.4 119.5)"><path d="M-14 2l13-6 14 6-13 8z" fill="#a89c6c" stroke="#3c361c" stroke-width=".9" stroke-linejoin="round"/><path d="M-7.500 -1l13.500 7M-1 -4l-13 6M-8 6l14-7" stroke="#3c361c" stroke-width=".8" fill="none"/><path d="M0 -6v9l7 4 7-4.500v-9z" fill="#8c8052" stroke="#3c361c" stroke-width=".8"/><path d="M7 -2v9" stroke="#3c361c" stroke-width=".8"/><path d="M0 -6l7-3.500 7 3-7 4.500z" fill="#78b8e8" stroke="#d0e8ff" stroke-width=".8"/><circle cx="7" cy="-6" r=".8" fill="#222"/></g><g transform="translate(613.8 119.5)"><g opacity=".5"><path d="M-14 -6l7 -3.85 4.9 5.25 -7 4.2 z" fill="#a89c6c" stroke="#3c361c" stroke-width="0.8" stroke-linejoin="round"/><path d="M-2 -10l7 -3.85 4.9 5.25 -7 4.2 z" fill="#a89c6c" stroke="#3c361c" stroke-width="0.8" stroke-linejoin="round"/></g><path d="M-12 6l18-7.500 9 4.500-18 8.500z" fill="#a89c6c" stroke="#3c361c" stroke-width=".9" stroke-linejoin="round"/><path d="M-5 3.500l9 5 5-2-9-5z" fill="#9cd0f8"/><path d="M-2.500 2.500l9 5" stroke="#fff" stroke-width="1"/></g><g transform="translate(649 119.5)"><ellipse cx="-3" cy="11" rx="11" ry="3" fill="#1e1e1e" opacity=".45"/><path d="M-11 -6l11-6 12 4-1 14-11 6-10-5z" fill="#a89c6c" stroke="#3c361c" stroke-width=".9" stroke-linejoin="round"/><path d="M-11 -6l11 5 12-7M0 -1l-1 13" stroke="#3c361c" stroke-width=".8" fill="none"/><path d="M-11 -6l11 5 12-7-12-4z" fill="#c4b88a" stroke="#3c361c" stroke-width=".8"/><path d="M1 -1l10-5.500-5 11z" fill="#78b8e8" stroke="#d0e8ff" stroke-width=".7"/></g><g transform="translate(683 119.5)"><g opacity=".55"><path d="M-11 -9l13-3 8 5-13 4z" fill="#a89c6c" stroke="#3c361c" stroke-width=".8"/></g><path d="M-14 2l9-3 6 11-9 3z" fill="#a89c6c" stroke="#3c361c" stroke-width=".9" stroke-linejoin="round"/><path d="M-2 -2l9-3 7 10-9 4z" fill="#a89c6c" stroke="#3c361c" stroke-width=".9" stroke-linejoin="round"/><path d="M-8 -3l13-3" stroke="#3c361c" stroke-width=".8"/></g><g transform="translate(716.7 119.5)"><g opacity=".55"><path d="M-12 -8l11 -3.3 7.7 4.5 -11 3.6 z" fill="#a89c6c" stroke="#3c361c" stroke-width="0.8" stroke-linejoin="round"/></g><path d="M-14 4l13-6 14 7-14 8z" fill="#a89c6c" stroke="#3c361c" stroke-width=".9" stroke-linejoin="round"/><path d="M-8 1l14 7.500M-1 -2l-13 6.500M-7.500 8l14-6.500" stroke="#3c361c" stroke-width=".8" fill="none"/><rect x="-4" y="-3.500" width="2.500" height="2.500" fill="#f0f040" stroke="#333" stroke-width=".4"/><rect x="1" y="9.500" width="2.500" height="2.500" fill="#f0f040" stroke="#333" stroke-width=".4"/><circle cx="-7" cy="-9" r="1.200" fill="#c8c8ff"/><circle cx="2" cy="-6" r="1.200" fill="#c8c8ff"/><g transform="translate(3 -5) scale(0.7)"><path d="M0 0L0 13.5L3.2 10.6L5.8 16.2L8.4 15L5.8 9.6L10 9.4Z" fill="#c00010" stroke="#fff" stroke-width="1.1" stroke-linejoin="round"/></g></g><g transform="translate(752.6 119.5)"><g opacity=".55"><path d="M-13 -9l7 -2.75 4.9 3.75 -7 3 z" fill="#a89c6c" stroke="#3c361c" stroke-width="0.8" stroke-linejoin="round"/><path d="M-3 -11l7 -2.75 4.9 3.75 -7 3 z" fill="#a89c6c" stroke="#3c361c" stroke-width="0.8" stroke-linejoin="round"/></g><path d="M-14 3l13-6 14 7-14 8z" fill="#a89c6c" stroke="#3c361c" stroke-width=".9" stroke-linejoin="round"/><path d="M-8 0l14 7.500M-7.500 8l14-7" stroke="#3c361c" stroke-width=".8" fill="none"/><path d="M-1 4l3 5" stroke="#fff" stroke-width="1.300"/><path d="M-4 -10l3 7M-1 -10l-3 7" stroke="#e01818" stroke-width="1.300"/></g><g transform="translate(788 119.5)"><path d="M-12 -7l12-6 10 6-11 6z" fill="#a89c6c" stroke="#3c361c" stroke-width=".9" stroke-linejoin="round"/><path d="M-12 -7l22 0M-1 -1l1-12" stroke="#3c361c" stroke-width=".8"/><path d="M-12 1l11 -2 14 8-13 7z" fill="#a89c6c" stroke="#3c361c" stroke-width=".9" stroke-linejoin="round"/><path d="M-12 1l12 13M-1 -1l1 15M0 14l13-7" stroke="#3c361c" stroke-width=".8" fill="none"/></g><g transform="translate(822 119.5)"><path d="M-13 -10l7-3 8 2v5l-8 3-7-3z" fill="#b4a878" stroke="#3c361c" stroke-width=".8" stroke-linejoin="round"/><path d="M-12 -6l6 2 8-3" stroke="#fff" stroke-width="1.200" fill="none"/><path d="M-6 0l9-5 11 7-2 7-10 5-8-6z" fill="#a89c6c" stroke="#3c361c" stroke-width=".9" stroke-linejoin="round"/><path d="M-6 0l10 6 10-4M4 6l-2 8" stroke="#3c361c" stroke-width=".8" fill="none"/><rect x="9.500" y="0" width="3" height="3" fill="#f0f040" stroke="#333" stroke-width=".5"/></g><g transform="translate(858 119.5)"><path d="M-13 -6l7.5 -2.75 5.25 3.75 -7.5 3 z" fill="#a89c6c" stroke="#3c361c" stroke-width="0.8" stroke-linejoin="round"/><path d="M-5 -9l7.5 -2.75 5.25 3.75 -7.5 3 z" fill="#a89c6c" stroke="#3c361c" stroke-width="0.8" stroke-linejoin="round"/><path d="M0 -3l7.5 -2.75 5.25 3.75 -7.5 3 z" fill="#a89c6c" stroke="#3c361c" stroke-width="0.8" stroke-linejoin="round"/><path d="M-11 3l7.5 -2.75 5.25 3.75 -7.5 3 z" fill="#78b8e8" stroke="#d0e8ff" stroke-width="0.8" stroke-linejoin="round"/><circle cx="-5" cy="4" r=".8" fill="#222"/></g><g transform="translate(893 119.5)"><path d="M-15 8l12-7 16 4-12 9z" fill="url(#bluep)"/><path d="M-3 1c2-2 2-6 3-10c1 4 1 8 3 10z" fill="#9cc8f0"/><ellipse cx="0" cy="3" rx="6.500" ry="2.500" fill="none" stroke="#e01818" stroke-width="1.600"/><path d="M0 -2v-9" stroke="#e01818" stroke-width="1.500"/><path d="M-2.500 -10l2.500-5 2.500 5z" fill="#e01818"/></g><g transform="translate(929 119.5)"><path d="M-12 -13L4 -10L4 10L-7 6z" fill="#fff" stroke="#111" stroke-width=".5"/><path d="M-12.0 -13.0L-8.0 -12.2L-7.1 -7.4L-10.8 -8.2zM-9.5 -3.5L-6.1 -2.6L-5.2 2.2L-8.2 1.2zM-7.1 -7.4L-3.4 -6.6L-2.8 -1.8L-6.1 -2.6zM-5.2 2.2L-2.1 3.1L-1.5 8.0L-4.2 7.0zM-4.0 -11.5L0.0 -10.8L0.3 -5.8L-3.4 -6.6zM-2.8 -1.8L0.6 -0.9L0.9 4.1L-2.1 3.1zM0.3 -5.8L4.0 -5.0L4.0 0.0L0.6 -0.9zM0.9 4.1L4.0 5.0L4.0 10.0L1.2 9.0z" fill="#111"/><g transform="translate(0 -2)"><path d="M3 2c1-4 4-6 8-6.500v-3l6 4.500-6 5v-3c-2 .5-4 2-4.500 4.500z" fill="#38b848" stroke="#0a5a14" stroke-width=".6"/></g><g transform="translate(-11 7) scale(0.95)"><path d="M-3.500 -3h7v2.500h-2.200v5.500h-2.600v-5.500h-2.200z" fill="#30c040" stroke="#0a5a14" stroke-width=".7"/></g></g><g transform="translate(963 119.5)"><path d="M-13 -12L-3 -7L5 9L-8 8z" fill="#fff" stroke="#111" stroke-width=".5"/><path d="M-13.0 -12.0L-10.5 -10.8L-9.1 -6.0L-11.8 -7.0zM-10.5 -2.0L-7.6 -1.2L-6.2 3.5L-9.2 3.0zM-9.1 -6.0L-6.4 -5.0L-4.8 -0.5L-7.6 -1.2zM-6.2 3.5L-3.1 4.0L-1.5 8.5L-4.8 8.2zM-8.0 -9.5L-5.5 -8.2L-3.7 -4.0L-6.4 -5.0zM-4.8 -0.5L-1.9 0.2L-0.1 4.5L-3.1 4.0zM-3.7 -4.0L-1.0 -3.0L1.0 1.0L-1.9 0.2zM-0.1 4.5L3.0 5.0L5.0 9.0L1.8 8.8z" fill="#111"/><path d="M-13 -12c-2 8 0 15 5 20" fill="none" stroke="#111" stroke-width="1.500"/><g transform="translate(1 -3)"><path d="M3 2c1-4 4-6 8-6.500v-3l6 4.500-6 5v-3c-2 .5-4 2-4.500 4.500z" fill="#38b848" stroke="#0a5a14" stroke-width=".6"/></g><g transform="translate(4 10) scale(0.95)"><path d="M-3.500 -3h7v2.500h-2.200v5.500h-2.600v-5.500h-2.200z" fill="#30c040" stroke="#0a5a14" stroke-width=".7"/></g></g><g transform="translate(998 119.5)"><path d="M-12 -11L-2 -7L5 8L-6 10z" fill="#fff" stroke="#111" stroke-width=".5"/><path d="M-12.0 -11.0L-9.5 -10.0L-7.9 -5.1L-10.5 -5.8zM-9.0 -0.5L-6.4 -0.2L-4.8 4.6L-7.5 4.8zM-7.9 -5.1L-5.4 -4.5L-3.8 0.0L-6.4 -0.2zM-4.8 4.6L-2.1 4.5L-0.5 9.0L-3.2 9.5zM-7.0 -9.0L-4.5 -8.0L-2.8 -3.9L-5.4 -4.5zM-3.8 0.0L-1.1 0.2L0.6 4.4L-2.1 4.5zM-2.8 -3.9L-0.2 -3.2L1.5 0.5L-1.1 0.2zM0.6 4.4L3.2 4.2L5.0 8.0L2.2 8.5z" fill="#111"/><path d="M-12 -11c-4 8-1 17 6 21" fill="none" stroke="#111" stroke-width="1.800"/><g transform="translate(1 -3)"><path d="M3 2c1-4 4-6 8-6.500v-3l6 4.500-6 5v-3c-2 .5-4 2-4.500 4.500z" fill="#38b848" stroke="#0a5a14" stroke-width=".6"/></g><g transform="translate(4 10) scale(0.95)"><path d="M-3.500 -3h7v2.500h-2.200v5.500h-2.600v-5.500h-2.200z" fill="#30c040" stroke="#0a5a14" stroke-width=".7"/></g></g><g transform="translate(1033 119.5)"><path d="M-12 -9L0 -13L0 2L-12 7z" fill="#fff" stroke="#111" stroke-width=".5"/><path d="M-12.0 -9.0L-9.0 -10.0L-9.0 -6.1L-12.0 -5.0zM-12.0 -1.0L-9.0 -2.1L-9.0 1.8L-12.0 3.0zM-9.0 -6.1L-6.0 -7.1L-6.0 -3.2L-9.0 -2.1zM-9.0 1.8L-6.0 0.6L-6.0 4.5L-9.0 5.8zM-6.0 -11.0L-3.0 -12.0L-3.0 -8.2L-6.0 -7.1zM-6.0 -3.2L-3.0 -4.4L-3.0 -0.6L-6.0 0.6zM-3.0 -8.2L0.0 -9.2L0.0 -5.5L-3.0 -4.4zM-3.0 -0.6L0.0 -1.8L0.0 2.0L-3.0 3.2z" fill="#111"/><path d="M0 -13L12 -9L12 7L0 2z" fill="#fff" stroke="#111" stroke-width=".5"/><path d="M0.0 -13.0L3.0 -12.0L3.0 -8.2L0.0 -9.2zM0.0 -5.5L3.0 -4.4L3.0 -0.6L0.0 -1.8zM3.0 -8.2L6.0 -7.1L6.0 -3.2L3.0 -4.4zM3.0 -0.6L6.0 0.6L6.0 4.5L3.0 3.2zM6.0 -11.0L9.0 -10.0L9.0 -6.1L6.0 -7.1zM6.0 -3.2L9.0 -2.1L9.0 1.8L6.0 0.6zM9.0 -6.1L12.0 -5.0L12.0 -1.0L9.0 -2.1zM9.0 1.8L12.0 3.0L12.0 7.0L9.0 5.8z" fill="#111"/><path d="M-12 7L0 2L12 7L0 13z" fill="#fff" stroke="#111" stroke-width=".5"/><path d="M-12.0 7.0L-9.0 5.8L-6.0 7.2L-9.0 8.5zM-6.0 10.0L-3.0 8.6L0.0 10.1L-3.0 11.5zM-6.0 7.2L-3.0 5.9L0.0 7.2L-3.0 8.6zM0.0 10.1L3.0 8.6L6.0 10.0L3.0 11.5zM-6.0 4.5L-3.0 3.2L0.0 4.6L-3.0 5.9zM0.0 7.2L3.0 5.9L6.0 7.2L3.0 8.6zM0.0 4.6L3.0 3.2L6.0 4.5L3.0 5.9zM6.0 7.2L9.0 5.8L12.0 7.0L9.0 8.5z" fill="#111"/><g transform="translate(0 -2) scale(1.500)"><path d="M-4.500 -3h9v2.500h-3v6h-3v-6h-3z" fill="#30c040" stroke="#0a5a14" stroke-width=".6"/></g></g><g transform="translate(1068.5 119.5)"><rect x="-13" y="-13" width="26" height="26" fill="#e4e4e4" stroke="#888" stroke-width=".6"/><rect x="-13" y="-13" width="26" height="4" fill="#4a90d8"/><circle cx="-11" cy="-11" r=".6" fill="#123"/><circle cx="-9" cy="-11" r=".6" fill="#123"/><circle cx="-7" cy="-11" r=".6" fill="#123"/><path d="M-6 -7.5L5.5 -3.5L5.5 10.5L-3 6z" fill="#fff" stroke="#111" stroke-width=".5"/><path d="M-6.0 -7.5L-3.1 -6.5L-2.6 -3.1L-5.2 -4.1zM-4.5 -0.8L-2.0 0.3L-1.4 3.7L-3.8 2.6zM-2.6 -3.1L0.1 -2.1L0.5 1.4L-2.0 0.3zM-1.4 3.7L0.9 4.8L1.2 8.2L-0.9 7.1zM-0.2 -5.5L2.6 -4.5L2.8 -1.0L0.1 -2.1zM0.5 1.4L3.0 2.4L3.2 5.9L0.9 4.8zM2.8 -1.0L5.5 0.0L5.5 3.5L3.0 2.4zM3.2 5.9L5.5 7.0L5.5 10.5L3.4 9.4z" fill="#111"/><g transform="translate(-7.5 7) scale(0.95)"><path d="M-3.500 -3h7v2.500h-2.200v5.500h-2.600v-5.500h-2.200z" fill="#30c040" stroke="#0a5a14" stroke-width=".7"/></g></g></svg>
<!-- s20_viewport -->
<div class="a" style="left:40px;top:148px;width:1616px;height:806px;border:1px solid #8a8a8a;box-sizing:border-box;border-top-color:#777;border-right-color:#8a8a8a;border-bottom-color:#9a9a9a;"></div>
<div class="a" id="vp">
<svg width="1614" height="765" viewBox="41 188 1614 765" style="left:0;top:0"><path d="M870.4 376.8L307.2 556.6M870.4 376.8L1408.0 584.8M887.4 383.4L321.4 567.5M852.0 382.7L1390.0 595.2M904.7 390.1L336.0 578.7M833.2 388.7L1371.7 606.0M922.4 396.9L351.1 590.2M814.1 394.8L1352.8 617.0M940.5 403.9L366.5 602.1M794.6 401.0L1333.5 628.3M959.0 411.1L382.4 614.3M774.7 407.3L1313.6 639.9M977.9 418.4L398.8 626.8M754.5 413.8L1293.3 651.8M997.2 425.8L415.6 639.8M733.8 420.4L1272.3 664.0M1017.0 433.5L433.0 653.1M712.7 427.1L1250.8 676.6M1037.2 441.3L450.9 666.8M691.2 434.0L1228.8 689.5M1057.9 449.3L469.3 680.9M669.3 441.0L1206.0 702.7M1079.0 457.5L488.4 695.5M646.9 448.1L1182.7 716.4M1122.9 474.5L528.3 726.1M600.7 462.9L1133.9 744.9M1145.7 483.3L549.2 742.1M576.8 470.5L1108.4 759.8M1169.0 492.3L570.8 758.7M552.5 478.3L1082.1 775.2M1192.9 501.6L593.2 775.9M527.6 486.2L1055.0 791.0M1217.4 511.0L616.4 793.7M502.2 494.3L1027.1 807.3M1242.5 520.7L640.3 812.0M476.2 502.6L998.3 824.2M1268.3 530.7L665.2 831.1M449.6 511.1L968.5 841.5M1294.7 541.0L690.9 850.8M422.4 519.8L937.8 859.5M1321.9 551.5L717.6 871.3M394.6 528.7L906.1 878.0M1349.8 562.3L745.4 892.6M366.1 537.8L873.2 897.2M1378.5 573.4L774.2 914.6M337.0 547.1L839.3 917.1M1408.0 584.8L804.1 937.6M307.2 556.6L804.1 937.6" stroke="#8c9098" stroke-width="1" fill="none" shape-rendering="crispEdges"/><path d="M1100.7 465.9L508.0 710.6M624.0 455.4L1158.6 730.5" stroke="#000" stroke-width="2" fill="none" shape-rendering="crispEdges"/><defs><linearGradient id="cylg" x1="0" x2="1" y1="0" y2="0"><stop offset="0" stop-color="#303030"/><stop offset=".04" stop-color="#383838"/><stop offset=".3" stop-color="#444"/><stop offset=".52" stop-color="#4b4b4b"/><stop offset=".8" stop-color="#404040"/><stop offset=".96" stop-color="#323232"/><stop offset="1" stop-color="#2a2a2a"/></linearGradient></defs><path d="M788 427 L792 630 A65 32 0 0 0 922.5 630 L928 427 Z" fill="url(#cylg)"/><ellipse cx="858" cy="427" rx="70" ry="26.3" fill="#464646"/></svg>
<div class="t" style="left:786px;top:747px;color:#0b6e38;font-size:9px;font-weight:bold;letter-spacing:.3px;line-height:10px;height:10px;">persp</div>
<svg width="30" height="40" viewBox="45 900 30 40" style="left:4px;top:712px"><path d="M66.500 928V915" stroke="#00ff00" stroke-width="1" shape-rendering="crispEdges"/><path d="M66.500 927.500L57 923.500" stroke="#1010ff" stroke-width="1.200"/><path d="M66.500 927.800L56.500 931.500" stroke="#ff1010" stroke-width="1.200"/><text x="63" y="912" font-size="10" font-weight="bold" fill="#10e810" font-family="Liberation Sans,sans-serif">y</text><text x="53" y="920" font-size="9.500" font-weight="bold" fill="#1818ff" font-family="Liberation Sans,sans-serif">z</text><text x="52" y="930.500" font-size="9.500" font-weight="bold" fill="#f01010" font-family="Liberation Sans,sans-serif">x</text></svg>
</div>
<!-- s25_panelbar -->
<span class="t" style="left:48.5px;top:151px;font-size:11.5px;color:#c8c8c8;line-height:14px;height:14px;letter-spacing:-0.80px;">View</span>
<span class="t" style="left:85px;top:151px;font-size:11.5px;color:#c8c8c8;line-height:14px;height:14px;letter-spacing:-0.53px;">Shading</span>
<span class="t" style="left:138px;top:151px;font-size:11.5px;color:#c8c8c8;line-height:14px;height:14px;letter-spacing:-0.35px;">Lighting</span>
<span class="t" style="left:190px;top:151px;font-size:11.5px;color:#c8c8c8;line-height:14px;height:14px;letter-spacing:-0.70px;">Show</span>
<span class="t" style="left:231px;top:151px;font-size:11.5px;color:#c8c8c8;line-height:14px;height:14px;letter-spacing:-0.37px;">Renderer</span>
<span class="t" style="left:291px;top:151px;font-size:11.5px;color:#c8c8c8;line-height:14px;height:14px;letter-spacing:-0.61px;">Panels</span>
<svg width="640" height="22" viewBox="41 166 640 22" style="left:41px;top:166px"><defs><radialGradient id="bsph" cx=".38" cy=".3" r=".75"><stop offset="0" stop-color="#d8ecff"/><stop offset=".45" stop-color="#4a8cd4"/><stop offset="1" stop-color="#163c78"/></radialGradient><radialGradient id="gsph" cx=".4" cy=".3" r=".75"><stop offset="0" stop-color="#fff"/><stop offset=".5" stop-color="#c8c8c8"/><stop offset="1" stop-color="#555"/></radialGradient><radialGradient id="osph" cx=".4" cy=".3" r=".75"><stop offset="0" stop-color="#ffb050"/><stop offset=".5" stop-color="#c86a10"/><stop offset="1" stop-color="#5a2800"/></radialGradient><radialGradient id="ysph" cx=".5" cy=".5" r=".5"><stop offset="0" stop-color="#ffff30"/><stop offset=".6" stop-color="#e8e810"/><stop offset="1" stop-color="#e8e810" stop-opacity="0"/></radialGradient><linearGradient id="bcube" x1="0" x2="1" y1="0" y2="1"><stop offset="0" stop-color="#9cd0ff"/><stop offset="1" stop-color="#2a6cc0"/></linearGradient></defs><path d="M44 169V186" stroke="#333" stroke-width="1"/><path d="M45 169V186" stroke="#6a6a6a" stroke-width="1"/><ellipse cx="45" cy="177.5" rx="1.300" ry="4" fill="#444" stroke="#888" stroke-width=".9"/><g transform="translate(60 177) scale(1)"><circle cx="-3.200" cy="-3" r="3.600" fill="#3a3a3a" stroke="#c8c8c8" stroke-width="1.600"/><circle cx="3" cy="-3.600" r="3" fill="#3a3a3a" stroke="#c8c8c8" stroke-width="1.500"/><circle cx="-3.200" cy="-3" r="1.100" fill="#d8d8d8"/><circle cx="3" cy="-3.600" r="1" fill="#d8d8d8"/><path d="M-4.500 3.500L4 .5l1.500 3.500-8.500 3z" fill="#111" stroke="#111" stroke-width="1.500" stroke-linejoin="round"/><path d="M5 1.500l3-2 .8 3.500-2.800.5z" fill="#111"/><path d="M-2 4.500l4.500-1.500" stroke="#888" stroke-width=".8"/></g><g transform="translate(77.5 175.5) scale(0.85)"><circle cx="-3.200" cy="-3" r="3.600" fill="#3a3a3a" stroke="#c8c8c8" stroke-width="1.600"/><circle cx="3" cy="-3.600" r="3" fill="#3a3a3a" stroke="#c8c8c8" stroke-width="1.500"/><circle cx="-3.200" cy="-3" r="1.100" fill="#d8d8d8"/><circle cx="3" cy="-3.600" r="1" fill="#d8d8d8"/><path d="M-4.500 3.500L4 .5l1.500 3.500-8.500 3z" fill="#111" stroke="#111" stroke-width="1.500" stroke-linejoin="round"/><path d="M5 1.500l3-2 .8 3.500-2.800.5z" fill="#111"/><path d="M-2 4.500l4.500-1.500" stroke="#888" stroke-width=".8"/></g><rect x="81.500" y="173.500" width="7" height="10" fill="#f4f4f4" stroke="#222" stroke-width=".6"/><path d="M83 176h4M83 178h4M83 180h4M83 182h4" stroke="#555" stroke-width=".8"/><rect x="94" y="170.500" width="14" height="13.500" fill="#f8f8f8" stroke="#999" stroke-width=".6"/><rect x="96" y="173" width="4" height="9" fill="none" stroke="#aaa" stroke-width=".8"/><path d="M102 168.500h4v14l-2-2.500-2 2.500z" fill="#20a020" stroke="#0a500a" stroke-width=".6"/><path d="M112.500 180l10-10 6.500 4.500-9 10z" fill="#e8e8e8" stroke="#555" stroke-width=".8"/><path d="M116 179.500l7-7.500 4 3-7 7.500z" fill="#2858c8"/><path d="M117.500 181l6-6.500 2.500 2-6 6.500z" fill="#38a838"/><circle cx="122" cy="174" r="1.500" fill="#f0e020"/><path d="M112.500 180l7.500 4.500" stroke="#aaa" stroke-width="1.400"/><path d="M137.500 168v8M133.500 172h8" stroke="#e01010" stroke-width="1.300"/><path d="M137.500 167l1.500 2h-3zM137.500 177l1.500-2h-3zM132.500 172l2-1.500v3zM142.500 172l-2-1.500v3z" fill="#e01010"/><circle cx="144.500" cy="175" r="3.300" fill="#fff" stroke="#c01010" stroke-width="1.200"/><path d="M143 175h3M144.500 173.500v3" stroke="#c01010" stroke-width="1"/><path d="M142 178l-6 7" stroke="#b06030" stroke-width="2"/><path d="M154.500 184.500l1.500-5 8-9.500 3.500 3-8 9.500z" fill="#c01818" stroke="#701010" stroke-width=".6"/><path d="M154.500 184.500l1.500-5 3.500 3z" fill="#f0d8a0"/><path d="M163 171l3.500 3" stroke="#fff" stroke-width="1"/><path d="M175 169V186" stroke="#333" stroke-width="1"/><path d="M176 169V186" stroke="#6a6a6a" stroke-width="1"/><ellipse cx="176" cy="177.5" rx="1.300" ry="4" fill="#444" stroke="#888" stroke-width=".9"/><rect x="183" y="168" width="18" height="18" rx="2" fill="#5a5a5a" stroke="#2a2a2a" stroke-width=".8"/><path d="M185 177l7-4 7 4-7 4z" fill="none" stroke="#f0f0f0" stroke-width="1.300"/><path d="M188.500 179l7-4M188.500 175l7 4" stroke="#f0f0f0" stroke-width="1"/><path d="M185 180l7 4 7-4" fill="none" stroke="#ccc" stroke-width="1"/><rect x="204" y="170" width="16" height="14" fill="#f4f4f4" stroke="#222" stroke-width=".8"/><rect x="206.500" y="173.500" width="11" height="7" fill="#8cc4f4" stroke="#123" stroke-width=".8"/><path d="M210 173.500v7M214 173.500v7" stroke="#123" stroke-width=".8"/><path d="M205.500 171.700h13M205.500 182.300h13" stroke="#222" stroke-width="1.200" stroke-dasharray="1.500 1.500"/><rect x="224" y="170" width="15" height="14" fill="#f4f4f4" stroke="#888" stroke-width=".6"/><circle cx="231.500" cy="177" r="4.500" fill="url(#bsph)"/><rect x="243" y="168" width="18" height="18" rx="2" fill="#5a5a5a" stroke="#2a2a2a" stroke-width=".8"/><rect x="245" y="170.500" width="14" height="13" fill="#b4b4b4"/><circle cx="252" cy="177" r="4" fill="#d4d4d4" stroke="#eee" stroke-width=".8"/><rect x="264.500" y="170.500" width="15" height="13" fill="#3a3a3a" stroke="#e0e0e0" stroke-width="1"/><path d="M264.500 170.500l15 13M279.500 170.500l-15 13M272 170.500v13M264.500 177h15M268 173.500h8v7h-8z" fill="none" stroke="#e0e0e0" stroke-width=".7"/><rect x="284.500" y="170.500" width="14" height="13" fill="#f4f4f4" stroke="#20a020" stroke-width="1.200"/><circle cx="289" cy="175.500" r="1.800" fill="#3a78c8"/><circle cx="294" cy="175" r="1.800" fill="#3a78c8"/><circle cx="291.500" cy="179.500" r="1.800" fill="#3a78c8"/><rect x="304.500" y="170.500" width="14" height="13" fill="#f4f4f4" stroke="#20a020" stroke-width="1.200"/><text x="311.500" y="182" text-anchor="middle" font-family="Liberation Serif,serif" font-weight="bold" font-size="12" fill="#111">T</text><path d="M326 169V186" stroke="#333" stroke-width="1"/><path d="M327 169V186" stroke="#6a6a6a" stroke-width="1"/><ellipse cx="327" cy="177.5" rx="1.300" ry="4" fill="#444" stroke="#888" stroke-width=".9"/><path d="M336.500 173.500l6.500-3 6.500 2.500v8l-6.500 3.500-6.500-3z" fill="#333" stroke="#f0f0f0" stroke-width="1.200" stroke-linejoin="round"/><path d="M336.500 173.500l6.500 2.500 6.500-3M343 176v8.500" fill="none" stroke="#f0f0f0" stroke-width="1.100"/><path d="M343 170.500v7l-6.500 3M343 177.500l6.500 3.500" fill="none" stroke="#aaa" stroke-width=".6"/><rect x="354" y="168" width="18" height="18" rx="2" fill="#5a5a5a" stroke="#2a2a2a" stroke-width=".8"/><path d="M356.500 173l6.500-2.500 6.500 2.500v8l-6.500 3-6.500-3z" fill="#3a7cd0"/><path d="M356.500 173l6.500-2.500 6.500 2.500-6.500 2.500z" fill="#a8d8ff"/><path d="M363 175.500l6.500-2.500v8l-6.500 3z" fill="#2560b0"/><path d="M378 169h-3v17h3M389 169h3v17h-3" fill="none" stroke="#10e010" stroke-width="1.800"/><circle cx="383.500" cy="177.500" r="6" fill="#222"/><path d="M383.500 171.500a6 6 0 0 1 6 6h-6z" fill="#bbb"/><path d="M383.500 183.500a6 6 0 0 1-6-6h6z" fill="#999"/><path d="M396.500 173l6.500-2.500 6.500 2.500v8l-6.500 3-6.500-3z" fill="#3a7cd0" stroke="#fff" stroke-width="1.200" stroke-linejoin="round"/><path d="M396.500 173l6.500-2.500 6.500 2.500-6.500 2.500z" fill="#a8d8ff" stroke="#fff" stroke-width="1"/><path d="M403 175.500v8.500" stroke="#fff" stroke-width="1"/><circle cx="423" cy="177" r="7" fill="#f8f8f8" stroke="#111" stroke-width=".9"/><path d="M421 170.300l4 .1 .5 3.600-4.500 .2zM416.300 175l4.200-.8 .5 4.800-4.500.5zM425.500 174l4-1.500 .5 5-4 .5zM421 179l4.500-.5 .5 4.500-4 .8zM417 180l4-1 1 4.500z M426 178.500l4-1-1.500 4.500-2.500 1z" fill="#111"/><circle cx="443" cy="177" r="6.500" fill="url(#ysph)"/><circle cx="443" cy="177" r="4.500" fill="#f4f410"/><ellipse cx="463" cy="184" rx="7" ry="2.500" fill="#111"/><circle cx="462.500" cy="176" r="6.500" fill="url(#bsph)"/><path d="M477 169V186" stroke="#333" stroke-width="1"/><path d="M478 169V186" stroke="#6a6a6a" stroke-width="1"/><ellipse cx="478" cy="177.5" rx="1.300" ry="4" fill="#444" stroke="#888" stroke-width=".9"/><path d="M486 186l2-7h11l2 7z" fill="#e8e8e8"/><circle cx="493.500" cy="176" r="6" fill="url(#gsph)"/><ellipse cx="514" cy="177" rx="7.500" ry="6" fill="url(#osph)"/><path d="M506 174h8M509 171v6" stroke="#e8a060" stroke-width=".8"/><circle cx="533" cy="177" r="6.500" fill="#2a2a2a" stroke="#bbb" stroke-width="1"/><path d="M533 170.500a6.500 6.500 0 0 0 0 13z" fill="#aaa"/><path d="M535 172h3v2.500h2.500v5H538v2.500h-3z" fill="#888"/><path d="M548 177l4-2 4 2v5l-4 2-4-2z" fill="#2a68b8"/><path d="M552 172l4.500-2.500 4.500 2.500v6l-4.500 2.500-4.500-2.500z" fill="#5a9ae0"/><path d="M552 172l4.500-2.500 4.500 2.500-4.500 2.500z" fill="#b8dcff"/><path d="M568 169V186" stroke="#333" stroke-width="1"/><path d="M569 169V186" stroke="#6a6a6a" stroke-width="1"/><ellipse cx="569" cy="177.5" rx="1.300" ry="4" fill="#444" stroke="#888" stroke-width=".9"/><rect x="579.500" y="170.500" width="12" height="9.500" fill="none" stroke="#30d030" stroke-width="1.200" stroke-dasharray="2 1.300"/><g transform="translate(585.5 176) scale(0.72)"><path d="M0 0L0 13.5L3.2 10.6L5.8 16.2L8.4 15L5.8 9.6L10 9.4Z" fill="#c00010" stroke="#fff" stroke-width="1.1" stroke-linejoin="round"/></g><path d="M599 169V186" stroke="#333" stroke-width="1"/><path d="M600 169V186" stroke="#6a6a6a" stroke-width="1"/><ellipse cx="600" cy="177.5" rx="1.300" ry="4" fill="#444" stroke="#888" stroke-width=".9"/><rect x="607" y="169" width="17" height="17" rx="2" fill="#222"/><rect x="627" y="169" width="17" height="17" rx="2" fill="#222"/><rect x="647" y="169" width="17" height="17" rx="2" fill="#222"/><path d="M610 174.500l5.500-2.500 5.500 2v6.500l-5.500 3-5.500-2.500z" fill="none" stroke="#e8e8e8" stroke-width="1.200" stroke-linejoin="round"/><path d="M610 174.500l5.500 2 5.500-2.500M615.500 176.500v7" fill="none" stroke="#e8e8e8" stroke-width="1.100"/><rect x="633.500" y="171.500" width="8" height="8" fill="none" stroke="#e8e8e8" stroke-width="1.200"/><rect x="630.500" y="175" width="8" height="8" fill="#222" stroke="#e8e8e8" stroke-width="1.200"/><path d="M651.500 177.500l8-4.500M651.500 177.500l8 4.500" stroke="#e8e8e8" stroke-width="1.400"/><circle cx="651.500" cy="177.500" r="2.200" fill="#222" stroke="#e8e8e8" stroke-width="1.200"/><circle cx="659.500" cy="173" r="2.200" fill="#222" stroke="#e8e8e8" stroke-width="1.200"/><circle cx="659.500" cy="182" r="2.200" fill="#222" stroke="#e8e8e8" stroke-width="1.200"/></svg>
<!-- s30_right -->
<div class="grip" style="left:1666px;top:153px;width:30px;height:7px;"></div>
<div class="grip" style="left:1833px;top:153px;width:30px;height:7px;"></div>
<span class="t" style="left:1708px;top:149px;font-size:10.5px;color:#c8c8c8;line-height:14px;height:14px;letter-spacing:-0.56px;">Channel Box / Layer Editor</span>
<div class="a" style="left:1864px;top:150px;width:12px;height:12px;background:#2b2b2b;border-radius:2px;"></div>
<svg width="12" height="12" style="left:1864px;top:150px"><path d="M4.5 2.5h5v5h-2M2.5 4.5h5v5h-5z" fill="none" stroke="#d8d8d8" stroke-width="1.3"/></svg>
<div class="a" style="left:1879px;top:150px;width:12px;height:12px;background:#2b2b2b;border-radius:2px;"></div>
<svg width="12" height="12" style="left:1879px;top:150px"><path d="M2.5 2.5l7 7M9.5 2.5l-7 7" fill="none" stroke="#d8d8d8" stroke-width="1.5"/></svg>
<svg width="18" height="18" viewBox="0 0 18 18" style="left:1830px;top:168px"><path d="M9 10V3" stroke="#28c828" stroke-width="1.6"/><path d="M6.5 4.5L9 1l2.5 3.5z" fill="#28c828"/><path d="M9 10l-6-2" stroke="#2840d8" stroke-width="1.6"/><path d="M4.5 5.5L1 7.5l3.5 2.5z" fill="#2840d8"/><path d="M9 10l5 4" stroke="#d82828" stroke-width="1.6"/><path d="M15.5 11L16 15.5l-4.5-.5z" fill="#d82828"/></svg>
<svg width="18" height="18" viewBox="0 0 18 18" style="left:1851px;top:167px"><circle cx="9" cy="9" r="7" fill="#777" stroke="#a8a8a8" stroke-width="1.6"/><path d="M9 2.8A6.2 6.2 0 0 1 9 15.2 4 4 0 0 0 9 9 3 3 0 0 1 9 2.8z" fill="#b4b4b4"/></svg>
<svg width="18" height="18" viewBox="0 0 18 18" style="left:1872px;top:167px"><path d="M2 15L12 5" stroke="#8a8a8a" stroke-width="2.2"/><path d="M8.5 3.5L15.5 1.5 13.5 8.5z" fill="#8a8a8a"/></svg>
<span class="t" style="left:1672px;top:191px;font-size:11.5px;color:#c8c8c8;line-height:14px;height:14px;letter-spacing:-0.57px;">Channels</span>
<span class="t" style="left:1731px;top:191px;font-size:11.5px;color:#c8c8c8;line-height:14px;height:14px;letter-spacing:-0.21px;">Edit</span>
<span class="t" style="left:1764px;top:191px;font-size:11.5px;color:#c8c8c8;line-height:14px;height:14px;letter-spacing:-0.04px;">Object</span>
<span class="t" style="left:1811px;top:191px;font-size:11.5px;color:#c8c8c8;line-height:14px;height:14px;letter-spacing:-0.70px;">Show</span>
<div class="a" style="left:1665px;top:208px;width:226px;height:511px;box-sizing:border-box;border:1px solid #2a2a2a;background:#2b2b2b;box-shadow:inset 0 0 0 1px #555,0 1px 0 #5a5a5a;"></div>
<div class="a" style="left:1740px;top:723px;width:72px;height:2px;background-image:radial-gradient(circle at 1px 1px,#6a6a6a 0.9px,transparent 1.1px);background-size:5px 3px;"></div>
<div class="vtab" style="left:1892px;top:148px;width:22px;height:150px;background:#5d5d5d;border-color:#6e6e6e;"></div>
<div class="vtab" style="left:1894px;top:298px;width:17px;height:98px;background:#3d3d3d;"></div>
<span class="vt" style="left:1910px;top:159.4px;font-size:11.5px;color:#c8c8c8;letter-spacing:-0.44px;">Channel Box / Layer Editor</span>
<span class="vt" style="left:1909px;top:310px;font-size:11.5px;color:#c8c8c8;letter-spacing:-0.10px;">Attribute Editor</span>
<div class="a" style="left:1722px;top:735px;width:61px;height:17px;box-sizing:border-box;border:1px solid #2e2e2e;border-bottom:none;background:#3d3d3d;border-radius:3px 3px 0 0;"></div>
<div class="a" style="left:1782px;top:735px;width:46px;height:17px;box-sizing:border-box;border:1px solid #2e2e2e;border-bottom:none;background:#3d3d3d;border-radius:3px 3px 0 0;"></div>
<div class="a" style="left:1665px;top:751px;width:226px;height:202px;box-sizing:border-box;border:1px solid #2e2e2e;border-radius:0 3px 3px 3px;box-shadow:inset 0 1px 0 #555;"></div>
<div class="a" style="left:1665px;top:731px;width:58px;height:21px;box-sizing:border-box;border:1px solid #6e6e6e;border-bottom:none;background:#5d5d5d;border-radius:3px 3px 0 0;"></div>
<span class="t" style="left:1677px;top:735px;font-size:11.5px;color:#c8c8c8;line-height:14px;height:14px;letter-spacing:-0.67px;">Display</span>
<span class="t" style="left:1734px;top:736px;font-size:11.5px;color:#c8c8c8;line-height:14px;height:14px;letter-spacing:-0.45px;">Render</span>
<span class="t" style="left:1794px;top:736px;font-size:11.5px;color:#c8c8c8;line-height:14px;height:14px;letter-spacing:-1.05px;">Anim</span>
<span class="t" style="left:1675px;top:755px;font-size:11.5px;color:#c8c8c8;line-height:14px;height:14px;letter-spacing:-0.42px;">Layers</span>
<span class="t" style="left:1722px;top:755px;font-size:11.5px;color:#c8c8c8;line-height:14px;height:14px;letter-spacing:-0.38px;">Options</span>
<span class="t" style="left:1774px;top:755px;font-size:11.5px;color:#c8c8c8;line-height:14px;height:14px;letter-spacing:-0.66px;">Help</span>
<svg width="20" height="18" viewBox="0 0 20 18" style="left:1788px;top:776px"><path d="M6 11.5l6-2.5 6 2.5-6 2.8z" fill="#e8e8e8" stroke="#555" stroke-width=".6"/><path d="M6 8.5l6-2.5 6 2.5-6 2.8z" fill="#d8d8d8" stroke="#555" stroke-width=".6"/><path d="M6 5.5l6-2.5 6 2.5-6 2.8z" fill="#8a8a8a" stroke="#555" stroke-width=".6"/><path d="M3.5 15V4" stroke="#d02020" stroke-width="1.4"/><path d="M1.5 5.5L3.5 1.5l2 4z" fill="#d02020"/></svg>
<svg width="20" height="18" viewBox="0 0 20 18" style="left:1813px;top:776px"><path d="M6 11.5l6-2.5 6 2.5-6 2.8z" fill="#e8e8e8" stroke="#555" stroke-width=".6"/><path d="M6 8.5l6-2.5 6 2.5-6 2.8z" fill="#d8d8d8" stroke="#555" stroke-width=".6"/><path d="M6 5.5l6-2.5 6 2.5-6 2.8z" fill="#f0f0f0" stroke="#555" stroke-width=".6"/><path d="M3.5 2V12" stroke="#d02020" stroke-width="1.4"/><path d="M1.5 11L3.5 15l2-4z" fill="#d02020"/></svg>
<svg width="22" height="20" viewBox="0 0 22 20" style="left:1840px;top:774px"><path d="M1 14l9-4.5 8 3-9 5z" fill="#f0f0f0" stroke="#666" stroke-width=".6"/><path d="M14 0.5l1.2 3 3.3.3-2.5 2.2.8 3.2-2.8-1.7-2.8 1.7.8-3.2-2.5-2.2 3.3-.3z" fill="#ffb020" stroke="#e07000" stroke-width=".5"/><circle cx="14" cy="5.3" r="1.5" fill="#fff8d0"/></svg>
<svg width="22" height="20" viewBox="0 0 22 20" style="left:1864px;top:774px"><path d="M1 14l9-4.5 8 3-9 5z" fill="#f0f0f0" stroke="#666" stroke-width=".6"/><circle cx="8" cy="10" r="3.6" fill="#3a78c8"/><circle cx="7" cy="8.8" r="1.3" fill="#9cc4f0"/><path d="M15 0.5l1.2 3 3.3.3-2.5 2.2.8 3.2-2.8-1.7-2.8 1.7.8-3.2-2.5-2.2 3.3-.3z" fill="#ffb020" stroke="#e07000" stroke-width=".5"/><circle cx="15" cy="5.3" r="1.5" fill="#fff8d0"/></svg>
<div class="a" style="left:1669px;top:798px;width:217px;height:150px;box-sizing:border-box;border:1px solid #3a3a3a;background:#2b2b2b;border-radius:2px;"></div>
<div class="a" style="left:1688px;top:932px;width:165px;height:13px;background:repeating-conic-gradient(#2b2b2b 0 25%,#484848 0 50%) 0 0/2px 2px;"></div>
<div class="sbtn" style="left:1672px;top:932px;width:14px;height:13px;"></div>
<div class="sbtn" style="left:1688px;top:932px;width:96px;height:13px;"></div>
<div class="sbtn" style="left:1853px;top:932px;width:14px;height:13px;"></div>
<div class="sbtn" style="left:1868px;top:932px;width:14px;height:13px;"></div>
<svg width="220" height="13" viewBox="1670 932 220 13" style="left:1670px;top:932px"><path d="M1681 934.5v8l-5-4zM1862 934.5v8l-5-4zM1873 934.5v8l5-4z" fill="#e0e0e0"/><g fill="#3a3a3a"><rect x="1728" y="935" width="1.2" height="1.2"/><rect x="1728" y="938" width="1.2" height="1.2"/><rect x="1728" y="941" width="1.2" height="1.2"/><rect x="1732" y="935" width="1.2" height="1.2"/><rect x="1732" y="938" width="1.2" height="1.2"/><rect x="1732" y="941" width="1.2" height="1.2"/><rect x="1736" y="935" width="1.2" height="1.2"/><rect x="1736" y="938" width="1.2" height="1.2"/><rect x="1736" y="941" width="1.2" height="1.2"/><rect x="1740" y="935" width="1.2" height="1.2"/><rect x="1740" y="938" width="1.2" height="1.2"/><rect x="1740" y="941" width="1.2" height="1.2"/><rect x="1744" y="935" width="1.2" height="1.2"/><rect x="1744" y="938" width="1.2" height="1.2"/><rect x="1744" y="941" width="1.2" height="1.2"/></g></svg>
<!-- s40_bottom -->
<div class="vgrip" style="left:2px;top:959px;height:26px;"></div>
<div class="a" style="left:7px;top:957px;width:1606px;height:30px;background:#2b2b2b;box-shadow:0 2px 0 #565656,inset 0 1px 0 #222;"></div>
<div class="a" style="left:17px;top:959px;width:11px;height:28px;background:#5e5e5e;border-left:1px solid #777;"></div>
<span class="t" style="left:19px;top:972px;font-size:11px;color:#e8e8e8;line-height:14px;height:14px;">1</span>
<span class="t" style="left:71px;top:957px;font-size:10.5px;color:#a0a0a0;line-height:14px;height:14px;">5</span>
<span class="t" style="left:137px;top:957px;font-size:10.5px;color:#a0a0a0;line-height:14px;height:14px;">10</span>
<span class="t" style="left:203px;top:957px;font-size:10.5px;color:#a0a0a0;line-height:14px;height:14px;">15</span>
<span class="t" style="left:269px;top:957px;font-size:10.5px;color:#a0a0a0;line-height:14px;height:14px;">20</span>
<span class="t" style="left:336px;top:957px;font-size:10.5px;color:#a0a0a0;line-height:14px;height:14px;">25</span>
<span class="t" style="left:402px;top:957px;font-size:10.5px;color:#a0a0a0;line-height:14px;height:14px;">30</span>
<span class="t" style="left:468px;top:957px;font-size:10.5px;color:#a0a0a0;line-height:14px;height:14px;">35</span>
<span class="t" style="left:534px;top:957px;font-size:10.5px;color:#a0a0a0;line-height:14px;height:14px;">40</span>
<span class="t" style="left:600px;top:957px;font-size:10.5px;color:#a0a0a0;line-height:14px;height:14px;">45</span>
<span class="t" style="left:667px;top:957px;font-size:10.5px;color:#a0a0a0;line-height:14px;height:14px;">50</span>
<span class="t" style="left:733px;top:957px;font-size:10.5px;color:#a0a0a0;line-height:14px;height:14px;">55</span>
<span class="t" style="left:799px;top:957px;font-size:10.5px;color:#a0a0a0;line-height:14px;height:14px;">60</span>
<span class="t" style="left:865px;top:957px;font-size:10.5px;color:#a0a0a0;line-height:14px;height:14px;">65</span>
<span class="t" style="left:931px;top:957px;font-size:10.5px;color:#a0a0a0;line-height:14px;height:14px;">70</span>
<span class="t" style="left:997px;top:957px;font-size:10.5px;color:#a0a0a0;line-height:14px;height:14px;">75</span>
<span class="t" style="left:1064px;top:957px;font-size:10.5px;color:#a0a0a0;line-height:14px;height:14px;">80</span>
<span class="t" style="left:1130px;top:957px;font-size:10.5px;color:#a0a0a0;line-height:14px;height:14px;">85</span>
<span class="t" style="left:1196px;top:957px;font-size:10.5px;color:#a0a0a0;line-height:14px;height:14px;">90</span>
<span class="t" style="left:1262px;top:957px;font-size:10.5px;color:#a0a0a0;line-height:14px;height:14px;">95</span>
<span class="t" style="left:1328px;top:957px;font-size:10.5px;color:#a0a0a0;line-height:14px;height:14px;">100</span>
<span class="t" style="left:1395px;top:957px;font-size:10.5px;color:#a0a0a0;line-height:14px;height:14px;">105</span>
<span class="t" style="left:1461px;top:957px;font-size:10.5px;color:#a0a0a0;line-height:14px;height:14px;">110</span>
<span class="t" style="left:1527px;top:957px;font-size:10.5px;color:#a0a0a0;line-height:14px;height:14px;">115</span>
<span class="t" style="left:1593px;top:957px;font-size:10.5px;color:#a0a0a0;line-height:14px;height:14px;">120</span>
<svg width="1606" height="31" viewBox="7 957 1606 31" style="left:7px;top:957px"><path d="M69.0 972V987M135.2 972V987M201.4 972V987M267.6 972V987M333.8 972V987M399.9 972V987M466.1 972V987M532.3 972V987M598.5 972V987M664.7 972V987M730.9 972V987M797.1 972V987M863.3 972V987M929.5 972V987M995.7 972V987M1061.8 972V987M1128.0 972V987M1194.2 972V987M1260.4 972V987M1326.6 972V987M1392.8 972V987M1459.0 972V987M1525.2 972V987M1591.4 972V987" stroke="#b8b8b8" stroke-width="1.3"/></svg>
<div class="fld" style="left:1616px;top:965px;width:68px;height:17px;"></div>
<span class="t" style="left:1621px;top:967px;font-size:11.5px;color:#e0e0e0;line-height:14px;height:14px;letter-spacing:-0.35px;">1.00</span>
<svg width="230" height="30" viewBox="1690 960 230 30" style="left:1690px;top:960px"><defs><linearGradient id="pbg" gradientUnits="userSpaceOnUse" x1="0" y1="968" x2="0" y2="983"><stop offset="0" stop-color="#f0f0f0"/><stop offset="1" stop-color="#9c9c9c"/></linearGradient></defs><rect x="1694" y="969" width="3" height="13" fill="url(#pbg)"/><path d="M1698 975.5L1704 971V980z" fill="url(#pbg)"/><path d="M1703 975.5L1710 970V981z" fill="url(#pbg)"/><rect x="1722" y="969" width="3" height="13" fill="url(#pbg)"/><path d="M1726 975.5L1737 969.5V981.5z" fill="url(#pbg)"/><rect x="1751" y="969" width="3" height="13" fill="url(#pbg)"/><path d="M1752.5 960V984" stroke="#e02020" stroke-width="1"/><path d="M1755 975.5L1765 969.5V981.5z" fill="url(#pbg)"/><path d="M1778 975.5L1793 969.5V981.5z" fill="url(#pbg)"/><path d="M1820 975.5L1805 969.5V981.5z" fill="url(#pbg)"/><path d="M1844 975.5L1833 969.5V981.5z" fill="url(#pbg)"/><rect x="1844.5" y="969" width="3" height="13" fill="url(#pbg)"/><path d="M1846.5 960V984" stroke="#e02020" stroke-width="1"/><path d="M1872 975.5L1861 969.5V981.5z" fill="url(#pbg)"/><rect x="1873" y="969" width="3" height="13" fill="url(#pbg)"/><path d="M1894 975.5L1888 971V980z" fill="url(#pbg)"/><path d="M1900 975.5L1893 970V981z" fill="url(#pbg)"/><rect x="1900.5" y="969" width="3" height="13" fill="url(#pbg)"/></svg>
<div class="a" style="left:0;top:991px;width:1914px;height:1px;background:#3a3a3a;"></div>
<div class="vgrip" style="left:2px;top:997px;height:20px;"></div>
<div class="fld" style="left:8px;top:997px;width:68px;height:20px;"></div>
<span class="t" style="left:12.5px;top:1000px;font-size:11.5px;color:#e0e0e0;line-height:14px;height:14px;letter-spacing:-0.35px;">1.00</span>
<div class="fld" style="left:80px;top:997px;width:68px;height:20px;"></div>
<span class="t" style="left:84.5px;top:1000px;font-size:11.5px;color:#e0e0e0;line-height:14px;height:14px;letter-spacing:-0.35px;">1.00</span>
<div class="a" style="left:151px;top:996px;width:1326px;height:22px;background:#2b2b2b;box-shadow:0 1px 0 #555,inset 0 1px 0 #222;"></div>
<div class="a" style="left:159px;top:999px;width:796px;height:17px;background:#696969;border-radius:1px;box-shadow:inset 0 1px 0 #777,inset 0 -1px 0 #555;"></div>
<svg width="12" height="14" style="left:162px;top:1001px"><path d="M0.5 12.5h8.5v-12" fill="none" stroke="#2e2e2e" stroke-width="1"/></svg>
<svg width="12" height="14" style="left:942px;top:1001px"><path d="M0.5 12.5h8.5v-12" fill="none" stroke="#2e2e2e" stroke-width="1"/></svg>
<span class="t" style="left:178.5px;top:1000px;font-size:11.5px;color:#e0e0e0;line-height:14px;height:14px;">1</span>
<span class="t" style="left:917.5px;top:1000px;font-size:11.5px;color:#e0e0e0;line-height:14px;height:14px;letter-spacing:-0.90px;">120</span>
<div class="fld" style="left:1481px;top:997px;width:68px;height:20px;"></div>
<span class="t" style="left:1485.5px;top:1000px;font-size:11.5px;color:#e0e0e0;line-height:14px;height:14px;letter-spacing:-0.28px;">120.00</span>
<div class="fld" style="left:1553px;top:997px;width:68px;height:20px;"></div>
<span class="t" style="left:1557.5px;top:1000px;font-size:11.5px;color:#e0e0e0;line-height:14px;height:14px;letter-spacing:-0.28px;">200.00</span>
<svg width="10" height="8" style="left:1626px;top:1001px"><path d="M1 1.5h8L5 6z" fill="#3a3a3a" stroke="#8a8a8a" stroke-width="1"/></svg>
<div class="dd" style="left:1643px;top:997px;width:102px;height:20px;"></div>
<span class="t" style="left:1647px;top:1000px;font-size:11.5px;color:#c8c8c8;line-height:14px;height:14px;letter-spacing:-0.50px;">No Anim Layer</span>
<svg width="10" height="8" style="left:1749px;top:1001px"><path d="M1 1.5h8L5 6z" fill="#3a3a3a" stroke="#8a8a8a" stroke-width="1"/></svg>
<div class="dd" style="left:1766px;top:997px;width:101px;height:20px;"></div>
<span class="t" style="left:1770px;top:1000px;font-size:11.5px;color:#c8c8c8;line-height:14px;height:14px;letter-spacing:-0.30px;">No Character Set</span>
<svg width="20" height="10" viewBox="0 0 20 10" style="left:1871px;top:1002px"><ellipse cx="4" cy="4.5" rx="3" ry="2.3" fill="none" stroke="#b0b0b0" stroke-width="1.3"/><path d="M7 4.5h10M13.5 4.5v3M16 4.5v3" stroke="#b0b0b0" stroke-width="1.3" fill="none"/></svg>
<svg width="14" height="14" viewBox="0 0 14 14" style="left:1895px;top:1000px"><rect x=".5" y=".5" width="13" height="13" fill="#f4f4f4" stroke="#888"/><rect x=".5" y=".5" width="13" height="3" fill="#4a90d8"/><path d="M2 10c2-5 3-5 4-2s2 3 3-2M2 7h10M4 12l5-7M7 12V5" stroke="#c82020" stroke-width="1" fill="none"/></svg>
<div class="vgrip" style="left:2px;top:1026px;height:22px;"></div>
<span class="t" style="left:18.5px;top:1030px;font-size:10.5px;color:#c8c8c8;line-height:14px;height:14px;letter-spacing:-1.03px;">MEL</span>
<div class="fld" style="left:53px;top:1026px;width:916px;height:22px;"></div>
<div class="a" style="left:976px;top:1025px;width:917px;height:24px;background:#000;"></div>
<svg width="14" height="14" viewBox="0 0 14 14" style="left:1895px;top:1030px"><rect x=".5" y=".5" width="13" height="13" fill="#f4f4f4" stroke="#888"/><rect x=".5" y=".5" width="13" height="3" fill="#4a90d8"/><rect x="2" y="5" width="10" height="3" fill="#fff" stroke="#555" stroke-width=".8"/><rect x="2" y="9" width="10" height="3" fill="#666"/></svg>
<div class="vgrip" style="left:2px;top:1057px;height:20px;"></div>
<div class="a" style="left:7px;top:1055px;width:1903px;height:22px;box-sizing:border-box;border:1px solid #353535;border-bottom-color:#585858;border-right-color:#585858;border-radius:2px;"></div>
<span class="t" style="left:20px;top:1060px;font-size:11.5px;color:#c8c8c8;line-height:14px;height:14px;letter-spacing:-0.56px;">Move Tool: Select an object to move.</span>
<!-- s50_toolbox -->
<div class="a" style="left:1px;top:153px;width:31px;height:6px;background-image:radial-gradient(circle at 1px 1px,#545454 0.9px,transparent 1.1px);background-size:4px 3px;"></div>
<div class="a" style="left:35px;top:147px;width:1px;height:769px;background:#353535;"></div>
<div class="a" style="left:0;top:915px;width:36px;height:1px;background:#353535;"></div>
<div class="tb" style="top:161px"></div>
<div class="tb" style="top:198px"></div>
<div class="tb" style="top:235px"></div>
<div class="tb" style="top:272px;background:linear-gradient(180deg,#bdbdbd,#a4a4a4);border-color:#666;box-shadow:none;"></div>
<div class="tb" style="top:309px"></div>
<div class="tb" style="top:346px"></div>
<div class="tb" style="top:418px"></div>
<svg width="33" height="33" style="left:0;top:161px"><g transform="translate(9.5 7) scale(1.3)"><path d="M0 0L0 13.5L3.2 10.6L5.8 16.2L8.4 15L5.8 9.6L10 9.4Z" fill="#c00010" stroke="#fff" stroke-width="1.1" stroke-linejoin="round"/></g></svg>
<svg width="33" height="33" style="left:0;top:198px"><path d="M5 5.500c4-3 11-3 15 0c3 4-1 6-1 10c0 4 2 7-2 9c-5 2-11 1-12-2c-2-4 2-6 2-9c0-3-4-5-2-8z" fill="none" stroke="#9a9a9a" stroke-width="1.400" stroke-dasharray="4 2.500"/><g transform="translate(17 12.5) scale(1.05)"><path d="M0 0L0 13.5L3.2 10.6L5.8 16.2L8.4 15L5.8 9.6L10 9.4Z" fill="#c00010" stroke="#fff" stroke-width="1.1" stroke-linejoin="round"/></g></svg>
<svg width="33" height="33" style="left:0;top:235px"><ellipse cx="13.5" cy="22.5" rx="10.5" ry="6" fill="none" stroke="#e00010" stroke-width="2.6"/><path d="M28.5 4.5L15 18" stroke="#a06a3a" stroke-width="2.6" stroke-linecap="round"/><path d="M16.5 15.5c-3 0-6 3-8.5 7c4 0 9-1 10.5-5z" fill="#f0e8c8" stroke="#5a4a2a" stroke-width=".7"/><g fill="#f0e040" stroke="#3a3a10" stroke-width=".8"><rect x="5.5" y="16.5" width="3" height="3"/><rect x="5.500" y="24" width="3" height="3"/><rect x="14.5" y="24.5" width="3" height="3"/></g></svg>
<svg width="33" height="33" style="left:0;top:272px"><defs><linearGradient id="cone" x1="0" x2="1"><stop offset="0" stop-color="#3570a8"/><stop offset=".42" stop-color="#7eb6e2"/><stop offset="1" stop-color="#24588f"/></linearGradient></defs><path d="M19.5 3.5L11.5 19.5c3 3 13 3 16 0z" fill="url(#cone)"/><path d="M5 19L22 28" stroke="#e00010" stroke-width="2.8"/><path d="M26.500 30.500L17.500 30l4-7.500z" fill="#e00010"/></svg>
<svg width="33" height="33" style="left:0;top:309px"><defs><radialGradient id="sph" cx=".36" cy=".3" r=".75"><stop offset="0" stop-color="#b4d4ee"/><stop offset=".45" stop-color="#4a86bc"/><stop offset="1" stop-color="#1c4678"/></radialGradient></defs><path d="M6 13.500c-5 4-4 9 1 11.500" fill="none" stroke="#e00010" stroke-width="3.200"/><circle cx="16.500" cy="14" r="9.300" fill="url(#sph)"/><path d="M26.500 13.500c5 5 2 11-7 13.500" fill="none" stroke="#e00010" stroke-width="3.600"/><path d="M11 27l9-5.500 1.500 8.500z" fill="#e00010"/></svg>
<svg width="33" height="33" style="left:0;top:346px"><g stroke="#e00010" stroke-width="2.400"><path d="M6 7l6 6M27 7l-6 6M6 27l6-6M27 27l-6-6"/></g><g fill="#e00010"><path d="M2.500 3.500l8 1.500-6.500 6.500zM30.500 3.500l-8 1.500 6.500 6.500zM2.500 30.500l8-1.500-6.500-6.500zM30.500 30.500l-8-1.500 6.500-6.500z"/></g><path d="M9.500 12.500l7-3.500 6.500 3v9l-6.500 4-7-3.500z" fill="#4a88cc"/><path d="M9.500 12.500l7-3.500 6.500 3-6.500 3.500z" fill="#c4e0f8"/><path d="M16.500 15.500l6.500-3.500v9l-6.500 4z" fill="#2a62a8"/></svg>
<svg width="33" height="33" style="left:0;top:418px"><defs><linearGradient id="tcyl" x1="0" x2="1"><stop offset="0" stop-color="#6a5e36"/><stop offset=".4" stop-color="#c8ba86"/><stop offset="1" stop-color="#5a4e2a"/></linearGradient></defs><path d="M8 9v15c0 4 19 4 19 0V9z" fill="url(#tcyl)" stroke="#3a3218" stroke-width=".8"/><ellipse cx="17.500" cy="9" rx="9.500" ry="3.500" fill="#c4b684" stroke="#3a3218" stroke-width=".8"/><path d="M8 16.500c0 4 19 4 19 0M14 12.300V27M21 12.300V27" fill="none" stroke="#3a3218" stroke-width=".9"/></svg>
<div class="lb" style="left:0;top:467px;width:32px;height:32px;"></div>
<svg width="33" height="33" style="left:0;top:467px"><path d="M16.5 6L27.5 13L16.5 20L5.5 13ZM11 9.5L22 16.5M22 9.5L11 16.5" fill="none" stroke="#444" stroke-width="1.3"/><g transform="translate(7 25) scale(1)"><path d="M0 0V-6" stroke="#18b018" stroke-width="1.6"/><path d="M0 0L-4.5 3.5" stroke="#1830e0" stroke-width="1.6"/><path d="M0 0L4.5 3.5" stroke="#e01818" stroke-width="1.6"/></g></svg>
<div class="lb" style="left:0px;top:504px;width:15.5px;height:16px;"></div>
<div class="lb" style="left:16.5px;top:504px;width:15.5px;height:16px;"></div>
<div class="lb" style="left:0px;top:521px;width:15.5px;height:16px;"></div>
<div class="lb" style="left:16.5px;top:521px;width:15.5px;height:16px;"></div>
<svg width="33" height="33" style="left:0;top:504px"><path d="M8 3v11M2.500 8.500h11M8 20v11M2.500 25.500h11M24.500 20v11M19 25.500h11" stroke="#444" stroke-width="1.3"/><path d="M24.5 2.5L30.5 6L24.5 9.5L18.5 6ZM21.5 4.25L27.5 7.75M27.5 4.25L21.5 7.75" fill="none" stroke="#444" stroke-width="1.1"/><g transform="translate(20 12.5) scale(0.6)"><path d="M0 0V-6" stroke="#18b018" stroke-width="1.6"/><path d="M0 0L-4.5 3.5" stroke="#1830e0" stroke-width="1.6"/><path d="M0 0L4.5 3.5" stroke="#e01818" stroke-width="1.6"/></g></svg>
<div class="db" style="left:0;top:542px;width:15px;height:33px;"></div>
<div class="lb" style="left:16.500px;top:542px;width:15.500px;height:33px;"></div>
<svg width="33" height="33" style="left:0;top:542px"><path d="M2 4h10M2 8h2M5.500 8h5M2 11.500h2M5.500 11.500h4M2 15h2M5.500 15h6M2 18.500h2M5.500 18.500h5M2 22h2M5.500 22h6" stroke="#d8d8d8" stroke-width="1"/><path d="M24.5 11L30.5 15L24.5 19L18.5 15ZM21.5 13L27.5 17M27.5 13L21.5 17" fill="none" stroke="#444" stroke-width="1.1"/><g transform="translate(20 28.5) scale(0.6)"><path d="M0 0V-6" stroke="#18b018" stroke-width="1.6"/><path d="M0 0L-4.5 3.5" stroke="#1830e0" stroke-width="1.6"/><path d="M0 0L4.5 3.5" stroke="#e01818" stroke-width="1.6"/></g></svg>
<div class="lb" style="left:0;top:581px;width:32px;height:15.500px;"></div>
<svg width="33" height="33" style="left:0;top:581px"><path d="M16.5 1.5L26.5 8L16.5 14.5L6.5 8ZM11.5 4.75L21.5 11.25M21.5 4.75L11.5 11.25" fill="none" stroke="#444" stroke-width="1.3"/><g transform="translate(3.5 12.5) scale(0.6)"><path d="M0 0V-6" stroke="#18b018" stroke-width="1.6"/><path d="M0 0L-4.5 3.5" stroke="#1830e0" stroke-width="1.6"/><path d="M0 0L4.5 3.5" stroke="#e01818" stroke-width="1.6"/></g><g transform="translate(6.5 17.5)"><rect width="25.5" height="14.5" fill="#dcdcdc"/><path d="M0 7.25H25.5" stroke="#888" stroke-width=".8"/><path d="M1 7.975 C5.1 -4.35 7.65 -1.45 12.75 7.25 S20.4 17.4 25.5 4.35" fill="none" stroke="#3a6a9a" stroke-width="1.3"/><path d="M6.885 0V14.5" stroke="#e01010" stroke-width="1"/></g><rect x="0" y="17.500" width="5.500" height="14.500" fill="#f0f0f0"/><path d="M1.500 21h2.500" stroke="#2040d0" stroke-width="1.2"/><path d="M1.500 24.500h2.500" stroke="#d02020" stroke-width="1.2"/><path d="M1.500 28h2.500" stroke="#20a020" stroke-width="1.2"/></svg>
<div class="db" style="left:0;top:619px;width:15px;height:33px;"></div>
<div class="lb" style="left:16.500px;top:619px;width:15.500px;height:33px;"></div>
<svg width="33" height="33" style="left:0;top:619px"><rect x="0" y="1" width="3.500" height="13" fill="#888"/><g fill="none" stroke-width="1"><rect x="6" y="2.500" width="2.500" height="2.500" stroke="#aaa"/><rect x="10.500" y="2.500" width="2.500" height="2.500" stroke="#aaa"/><rect x="6" y="6.500" width="2.500" height="2.500" stroke="#e04040"/><rect x="10.500" y="6.500" width="2.500" height="2.500" stroke="#e04040"/><rect x="6" y="10.500" width="2.500" height="2.500" stroke="#30c030"/><rect x="10.500" y="10.500" width="2.500" height="2.500" stroke="#30c030"/></g><rect x="2.500" y="17.500" width="10.500" height="11" fill="#1a1a1a" stroke="#666" stroke-width=".8"/><circle cx="7.500" cy="23" r="3.200" fill="#aaa"/><path d="M3 30.500h9" stroke="#888" stroke-width="1"/><path d="M24.5 11L30.5 15L24.5 19L18.5 15ZM21.5 13L27.5 17M27.5 13L21.5 17" fill="none" stroke="#444" stroke-width="1.1"/><g transform="translate(20 28.5) scale(0.6)"><path d="M0 0V-6" stroke="#18b018" stroke-width="1.6"/><path d="M0 0L-4.5 3.5" stroke="#1830e0" stroke-width="1.6"/><path d="M0 0L4.5 3.5" stroke="#e01818" stroke-width="1.6"/></g></svg>
<div class="lb" style="left:0;top:657px;width:15px;height:16px;"></div>
<div class="db" style="left:16.500px;top:657px;width:15.500px;height:16px;"></div>
<svg width="33" height="33" style="left:0;top:657px"><path d="M7.5 2L14 6L7.5 10L1 6ZM4.25 4L10.75 8M10.75 4L4.25 8" fill="none" stroke="#444" stroke-width="1.1"/><g transform="translate(3.5 13) scale(0.6)"><path d="M0 0V-6" stroke="#18b018" stroke-width="1.6"/><path d="M0 0L-4.5 3.5" stroke="#1830e0" stroke-width="1.6"/><path d="M0 0L4.5 3.5" stroke="#e01818" stroke-width="1.6"/></g><g fill="none" stroke-width="1"><rect x="18.500" y="2.500" width="6" height="2.500" stroke="#e8e070"/><rect x="22.500" y="7" width="6" height="2.500" stroke="#c8c8c8"/><rect x="24.500" y="11.500" width="6" height="2.500" stroke="#c8c8c8"/><path d="M20 5v3.500h2.500M22 10v3h2.500" stroke="#999"/></g><g transform="translate(6.5 18)"><rect width="25.5" height="14.5" fill="#dcdcdc"/><path d="M0 7.25H25.5" stroke="#888" stroke-width=".8"/><path d="M1 7.975 C5.1 -4.35 7.65 -1.45 12.75 7.25 S20.4 17.4 25.5 4.35" fill="none" stroke="#3a6a9a" stroke-width="1.3"/><path d="M6.885 0V14.5" stroke="#e01010" stroke-width="1"/></g><rect x="0" y="18" width="5.500" height="14.500" fill="#f0f0f0"/><path d="M1.500 21.500h2.500" stroke="#2040d0" stroke-width="1.2"/><path d="M1.500 25h2.500" stroke="#d02020" stroke-width="1.2"/><path d="M1.500 28.500h2.500" stroke="#20a020" stroke-width="1.2"/></svg>
<div class="a" style="left:0;top:693px;width:31px;height:220px;box-sizing:border-box;border-right:1px solid #3c3c3c;border-top:1px solid #3c3c3c;border-bottom:1px solid #3c3c3c;"></div>
<svg width="10" height="6" style="left:10px;top:706px"><path d="M1 1h7L4.500 4.500z" fill="#888"/></svg>
<div class="a" style="left:0;top:917px;width:32px;height:32px;background:radial-gradient(ellipse 26px 14px at 0 100%,#38c8c8 0,#a8e4e4 55%,rgba(255,255,255,0) 100%),#fdfdfd;overflow:hidden;"></div>
<svg width="32" height="32" style="left:0;top:917px"><path d="M4 9.500L15.500 2.800 27.500 9.500V24H22.500V17L15.500 23.500 9 17V24H4z" fill="#12888c"/><path d="M4 9.500L15.500 2.800V12L9 17V24H4z" fill="#22b4b8"/><path d="M15.500 2.800L27.500 9.500V24H22.500V17L15.500 12z" fill="#0d7478"/><path d="M9 17l6.500-5 7 5-7 6.500z" fill="#16989c"/><path d="M10 8l5.500-3.200 5.500 3.200-5.500 4z" fill="#0a5c62"/><text x="12" y="31" font-size="6.500" fill="#555" font-family="Liberation Sans,sans-serif" font-weight="bold" textLength="19" lengthAdjust="spacingAndGlyphs">MAYA</text></svg>
</div>
</body></html>
